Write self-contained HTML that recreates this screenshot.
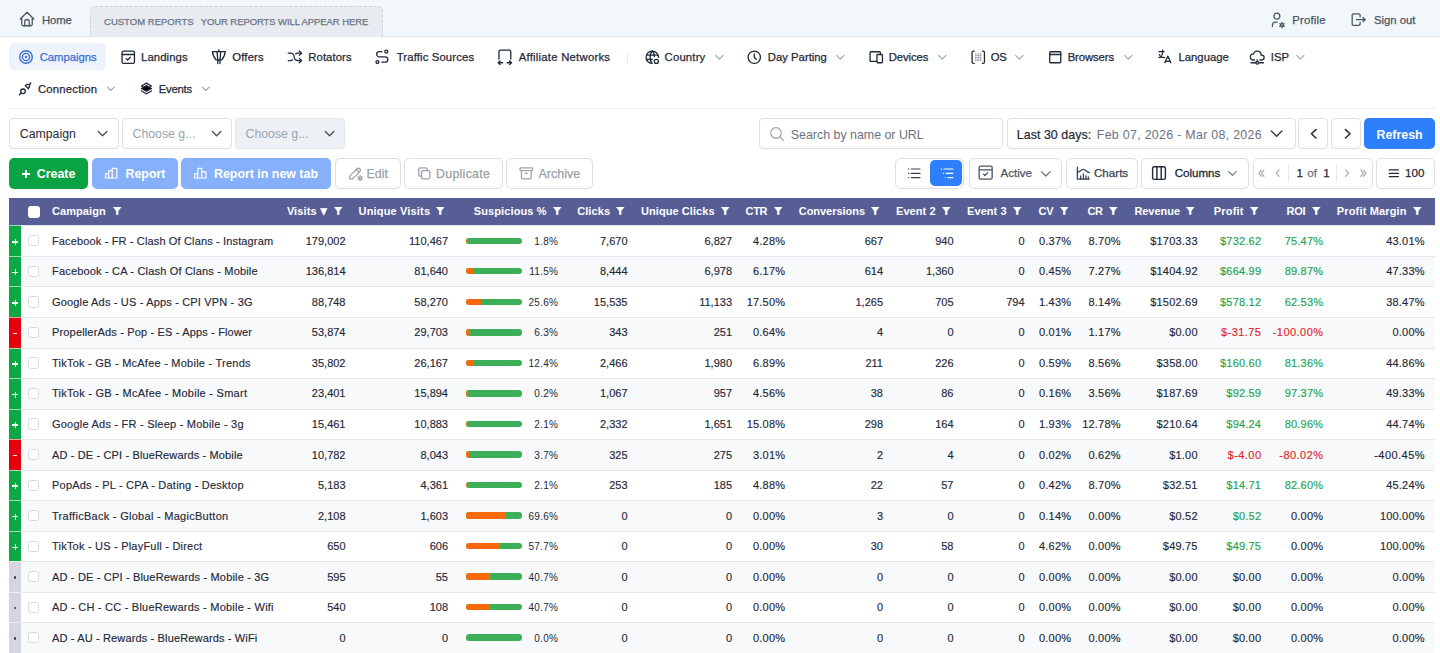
<!DOCTYPE html>
<html><head><meta charset="utf-8"><title>Campaigns</title>
<style>
html,body{margin:0;padding:0;width:1440px;height:653px;overflow:hidden;background:#fff;font-family:"Liberation Sans", sans-serif;}
#root{position:relative;width:1440px;height:653px;overflow:hidden;}
svg{display:block}
</style></head><body><div id="root">
<div style="position:absolute;left:0px;top:0px;width:1440px;height:37px;box-sizing:border-box;background:#f1f7fa;border-bottom:1px solid #dfe4e9"></div>
<svg style="position:absolute;left:17.75px;top:10.45px" width="18.0" height="18.0" viewBox="0 0 24 24" fill="none" stroke="#4b5563" stroke-width="1.73" stroke-linecap="round" stroke-linejoin="round" ><path d="M5 12H3l9-9 9 9h-2"/><path d="M5 12v7a2 2 0 0 0 2 2h10a2 2 0 0 0 2-2v-7"/><path d="M9 21v-6a2 2 0 0 1 2-2h2a2 2 0 0 1 2 2v6"/></svg>
<div style="position:absolute;left:42px;top:14.85px;font-size:11.3px;line-height:11.3px;color:#4b5563;font-weight:400;letter-spacing:-0.15px;white-space:nowrap;-webkit-text-stroke:0.25px currentColor;">Home</div>
<div style="position:absolute;left:90px;top:6px;width:293px;height:31px;box-sizing:border-box;background:#e8ecf1;border:1px dashed #cbd2da;border-bottom:none;border-radius:5px 5px 0 0"></div>
<div style="position:absolute;left:104px;top:16.75px;font-size:9.5px;line-height:9.5px;color:#6b7485;font-weight:400;letter-spacing:0.02px;white-space:nowrap;-webkit-text-stroke:0.25px currentColor;">CUSTOM REPORTS</div>
<div style="position:absolute;left:200.7px;top:16.75px;font-size:9.5px;line-height:9.5px;color:#6b7485;font-weight:400;letter-spacing:-0.083px;white-space:nowrap;-webkit-text-stroke:0.25px currentColor;">YOUR REPORTS WILL APPEAR HERE</div>
<svg style="position:absolute;left:1268.28px;top:11.08px" width="17.73" height="17.73" viewBox="0 0 24 24" fill="none" stroke="#4b5563" stroke-width="1.76" stroke-linecap="round" stroke-linejoin="round" ><circle cx="12" cy="7" r="4"/><path d="M6 21v-2a4 4 0 0 1 4-4h2.5"/><circle cx="19" cy="19" r="2"/><path d="M19 15.5V17M19 21v1.5M22.032 17.25l-1.299.75M17.27 20l-1.3.75M15.97 17.25l1.3.75M20.733 20l1.3.75"/></svg>
<div style="position:absolute;left:1292.3px;top:14.85px;font-size:11.3px;line-height:11.3px;color:#4b5563;font-weight:400;letter-spacing:0.21px;white-space:nowrap;-webkit-text-stroke:0.25px currentColor;">Profile</div>
<svg style="position:absolute;left:1349.83px;top:11.33px" width="17.33" height="17.33" viewBox="0 0 24 24" fill="none" stroke="#4b5563" stroke-width="1.8" stroke-linecap="round" stroke-linejoin="round" ><path d="M14 8V6a2 2 0 0 0-2-2H5a2 2 0 0 0-2 2v12a2 2 0 0 0 2 2h7a2 2 0 0 0 2-2v-2"/><path d="M9 12h12l-3-3"/><path d="M18 15l3-3"/></svg>
<div style="position:absolute;left:1374px;top:14.85px;font-size:11.3px;line-height:11.3px;color:#4b5563;font-weight:400;letter-spacing:0px;white-space:nowrap;-webkit-text-stroke:0.25px currentColor;">Sign out</div>
<div style="position:absolute;left:9px;top:43px;width:97px;height:27px;box-sizing:border-box;background:#eef3fb;border-radius:5px"></div>
<svg style="position:absolute;left:19px;top:49.8px" width="14" height="14" viewBox="0 0 14 14" fill="none" stroke="#3a6fd6" stroke-width="1.4" stroke-linecap="round" stroke-linejoin="round" ><circle cx="7" cy="7" r="6.3"/><circle cx="7" cy="7" r="3.6"/><circle cx="7" cy="7" r="1.2" fill="#3a6fd6" stroke="none"/></svg>
<div style="position:absolute;left:39.7px;top:51.85px;font-size:11.3px;line-height:11.3px;color:#3a6fd6;font-weight:400;letter-spacing:-0.024px;white-space:nowrap;-webkit-text-stroke:0.25px currentColor;">Campaigns</div>
<svg style="position:absolute;left:119.63px;top:48.53px" width="16.53" height="16.53" viewBox="0 0 24 24" fill="none" stroke="#1f2937" stroke-width="1.89" stroke-linecap="round" stroke-linejoin="round" ><rect x="3" y="3" width="18" height="18" rx="2"/><path d="M3 8h18"/><path d="M9 14l2 2 4-4"/></svg>
<div style="position:absolute;left:141px;top:51.85px;font-size:11.3px;line-height:11.3px;color:#1f2937;font-weight:400;letter-spacing:0.113px;white-space:nowrap;-webkit-text-stroke:0.25px currentColor;">Landings</div>
<svg style="position:absolute;left:209.58px;top:47.98px" width="17.73" height="17.73" viewBox="0 0 24 24" fill="none" stroke="#1f2937" stroke-width="1.76" stroke-linecap="round" stroke-linejoin="round" ><path d="M12 2.5v1.5"/><path d="M3.5 5h17"/><path d="M3.5 5c0 3 1.5 7 4.5 11h8c3-4 4.5-8 4.5-11"/><path d="M9.5 5l1 11M14.5 5l-1 11"/><path d="M10.5 16v5M13.5 16v5"/></svg>
<div style="position:absolute;left:232.3px;top:51.85px;font-size:11.3px;line-height:11.3px;color:#1f2937;font-weight:400;letter-spacing:0.159px;white-space:nowrap;-webkit-text-stroke:0.25px currentColor;">Offers</div>
<svg style="position:absolute;left:286.08px;top:47.98px" width="17.73" height="17.73" viewBox="0 0 24 24" fill="none" stroke="#1f2937" stroke-width="1.76" stroke-linecap="round" stroke-linejoin="round" ><path d="M18 4l3 3-3 3"/><path d="M18 20l3-3-3-3"/><path d="M3 7h3a5 5 0 0 1 5 5 5 5 0 0 0 5 5h5"/><path d="M21 7h-5a4.978 4.978 0 0 0-3 1m-4 8a4.984 4.984 0 0 1-3 1H3"/></svg>
<div style="position:absolute;left:308.3px;top:51.85px;font-size:11.3px;line-height:11.3px;color:#1f2937;font-weight:400;letter-spacing:0.079px;white-space:nowrap;-webkit-text-stroke:0.25px currentColor;">Rotators</div>
<svg style="position:absolute;left:373.48px;top:47.98px" width="17.73" height="17.73" viewBox="0 0 24 24" fill="none" stroke="#1f2937" stroke-width="1.76" stroke-linecap="round" stroke-linejoin="round" ><circle cx="6" cy="19" r="2"/><circle cx="18" cy="5" r="2"/><path d="M12 19h4.5a3.5 3.5 0 0 0 0-7h-8a3.5 3.5 0 0 1 0-7H12"/></svg>
<div style="position:absolute;left:396.7px;top:51.85px;font-size:11.3px;line-height:11.3px;color:#1f2937;font-weight:400;letter-spacing:0.144px;white-space:nowrap;-webkit-text-stroke:0.25px currentColor;">Traffic Sources</div>
<svg style="position:absolute;left:496.38px;top:47.98px" width="17.73" height="17.73" viewBox="0 0 24 24" fill="none" stroke="#1f2937" stroke-width="1.76" stroke-linecap="round" stroke-linejoin="round" ><path d="M4 15V5a2 2 0 0 1 2-2h12a2 2 0 0 1 2 2v10"/><path d="M3 20h6M5.5 17.5L3 20l2.5 2.5M15 20h6M18.5 17.5L21 20l-2.5 2.5"/></svg>
<div style="position:absolute;left:518.7px;top:51.85px;font-size:11.3px;line-height:11.3px;color:#1f2937;font-weight:400;letter-spacing:0.249px;white-space:nowrap;-webkit-text-stroke:0.25px currentColor;">Affiliate Networks</div>
<svg style="position:absolute;left:643.73px;top:48.53px" width="16.53" height="16.53" viewBox="0 0 24 24" fill="none" stroke="#1f2937" stroke-width="1.89" stroke-linecap="round" stroke-linejoin="round" ><path d="M21 12a9 9 0 1 0-9.5 9"/><path d="M3.6 9h16.8"/><path d="M3.6 15h8.4"/><path d="M11.5 3a17 17 0 0 0 0 18"/><path d="M12.5 3a17 17 0 0 1 2.5 8"/><circle cx="18" cy="18" r="3"/></svg>
<div style="position:absolute;left:664.6px;top:51.85px;font-size:11.3px;line-height:11.3px;color:#1f2937;font-weight:400;letter-spacing:0.182px;white-space:nowrap;-webkit-text-stroke:0.25px currentColor;">Country</div>
<svg style="position:absolute;left:712.35px;top:49.82px" width="14.6" height="14.6" viewBox="0 0 24 24" fill="none" stroke="#9ca3af" stroke-width="1.81" stroke-linecap="round" stroke-linejoin="round" ><path d="M6 9l6 6 6-6"/></svg>
<svg style="position:absolute;left:746.23px;top:48.53px" width="16.53" height="16.53" viewBox="0 0 24 24" fill="none" stroke="#1f2937" stroke-width="1.89" stroke-linecap="round" stroke-linejoin="round" ><circle cx="12" cy="12" r="9"/><path d="M12 7v5l3 3"/></svg>
<div style="position:absolute;left:767.8px;top:51.85px;font-size:11.3px;line-height:11.3px;color:#1f2937;font-weight:400;letter-spacing:0.006px;white-space:nowrap;-webkit-text-stroke:0.25px currentColor;">Day Parting</div>
<svg style="position:absolute;left:833.35px;top:49.82px" width="14.6" height="14.6" viewBox="0 0 24 24" fill="none" stroke="#9ca3af" stroke-width="1.81" stroke-linecap="round" stroke-linejoin="round" ><path d="M6 9l6 6 6-6"/></svg>
<svg style="position:absolute;left:867.73px;top:48.53px" width="16.53" height="16.53" viewBox="0 0 24 24" fill="none" stroke="#1f2937" stroke-width="1.89" stroke-linecap="round" stroke-linejoin="round" ><rect x="13" y="8" width="8" height="12" rx="1"/><path d="M18 8V5a1 1 0 0 0-1-1H4a1 1 0 0 0-1 1v12a1 1 0 0 0 1 1h9"/></svg>
<div style="position:absolute;left:888.7px;top:51.85px;font-size:11.3px;line-height:11.3px;color:#1f2937;font-weight:400;letter-spacing:-0.088px;white-space:nowrap;-webkit-text-stroke:0.25px currentColor;">Devices</div>
<svg style="position:absolute;left:935.35px;top:49.82px" width="14.6" height="14.6" viewBox="0 0 24 24" fill="none" stroke="#9ca3af" stroke-width="1.81" stroke-linecap="round" stroke-linejoin="round" ><path d="M6 9l6 6 6-6"/></svg>
<svg style="position:absolute;left:969.93px;top:48.53px" width="16.53" height="16.53" viewBox="0 0 24 24" fill="none" stroke="#1f2937" stroke-width="1.89" stroke-linecap="round" stroke-linejoin="round" ><path d="M6 3H5a2 2 0 0 0-2 2v14a2 2 0 0 0 2 2h1"/><path d="M18 3h1a2 2 0 0 1 2 2v14a2 2 0 0 1-2 2h-1"/><path stroke-width="1" stroke-opacity="0.55" stroke-dasharray="1 1.6" d="M8.5 6v12M12 6v12M15.5 6v12M8 9h8M8 12.5h8M8 16h8"/></svg>
<div style="position:absolute;left:990.8px;top:51.85px;font-size:11.3px;line-height:11.3px;color:#1f2937;font-weight:400;letter-spacing:-0.3px;white-space:nowrap;-webkit-text-stroke:0.25px currentColor;">OS</div>
<svg style="position:absolute;left:1011.55px;top:49.82px" width="14.6" height="14.6" viewBox="0 0 24 24" fill="none" stroke="#9ca3af" stroke-width="1.81" stroke-linecap="round" stroke-linejoin="round" ><path d="M6 9l6 6 6-6"/></svg>
<svg style="position:absolute;left:1046.93px;top:48.53px" width="16.53" height="16.53" viewBox="0 0 24 24" fill="none" stroke="#1f2937" stroke-width="1.89" stroke-linecap="round" stroke-linejoin="round" ><rect x="4" y="4" width="16" height="16" rx="1"/><path d="M4 8h16"/></svg>
<div style="position:absolute;left:1067.7px;top:51.85px;font-size:11.3px;line-height:11.3px;color:#1f2937;font-weight:400;letter-spacing:-0.104px;white-space:nowrap;-webkit-text-stroke:0.25px currentColor;">Browsers</div>
<svg style="position:absolute;left:1120.75px;top:49.82px" width="14.6" height="14.6" viewBox="0 0 24 24" fill="none" stroke="#9ca3af" stroke-width="1.81" stroke-linecap="round" stroke-linejoin="round" ><path d="M6 9l6 6 6-6"/></svg>
<svg style="position:absolute;left:1156.38px;top:47.98px" width="17.73" height="17.73" viewBox="0 0 24 24" fill="none" stroke="#1f2937" stroke-width="1.76" stroke-linecap="round" stroke-linejoin="round" ><path d="M4 5h7"/><path d="M9 3v2c0 4.418-2.239 8-5 8"/><path d="M5 9c0 2.144 2.952 3.908 6.7 4"/><path d="M12 20l4-9 4 9"/><path d="M19.1 18h-6.2"/></svg>
<div style="position:absolute;left:1178.5px;top:51.85px;font-size:11.3px;line-height:11.3px;color:#1f2937;font-weight:400;letter-spacing:0.003px;white-space:nowrap;-webkit-text-stroke:0.25px currentColor;">Language</div>
<svg style="position:absolute;left:1249.43px;top:48.53px" width="16.53" height="16.53" viewBox="0 0 24 24" fill="none" stroke="#1f2937" stroke-width="1.89" stroke-linecap="round" stroke-linejoin="round" ><path d="M3 20h7"/><path d="M14 20h7"/><path d="M10 20a2 2 0 1 0 4 0 2 2 0 0 0-4 0"/><path d="M12 16v2"/><path d="M8 16.004H6.657C4.085 16 2 13.993 2 11.517c0-2.475 2.085-4.482 4.657-4.482.393-1.762 1.794-3.2 3.675-3.773 1.88-.572 3.956-.193 5.444 1 1.488 1.19 2.162 3.007 1.77 4.769h.99c1.913 0 3.464 1.56 3.464 3.486 0 1.927-1.551 3.487-3.465 3.487H16"/></svg>
<div style="position:absolute;left:1270.8px;top:51.85px;font-size:11.3px;line-height:11.3px;color:#1f2937;font-weight:400;letter-spacing:0.013px;white-space:nowrap;-webkit-text-stroke:0.25px currentColor;">ISP</div>
<svg style="position:absolute;left:1293.05px;top:49.82px" width="14.6" height="14.6" viewBox="0 0 24 24" fill="none" stroke="#9ca3af" stroke-width="1.81" stroke-linecap="round" stroke-linejoin="round" ><path d="M6 9l6 6 6-6"/></svg>
<div style="position:absolute;left:627px;top:52px;width:1px;height:11px;box-sizing:border-box;background:#e5e7eb"></div>
<svg style="position:absolute;left:15px;top:78px" width="22" height="20" viewBox="15 78 22 20" fill="none" stroke="#1f2937" stroke-width="1.3" stroke-linecap="round" stroke-linejoin="round"><circle cx="23" cy="91.3" r="2.3"/><path d="M21.2 93L19.4 94.8"/><path d="M25.3 85.6L28.4 88.7Q29.9 86.6 29.6 84.5Q27.6 84.1 25.3 85.6Z"/><path d="M29.5 84.4L30.9 83"/></svg>
<div style="position:absolute;left:38px;top:83.85px;font-size:11.3px;line-height:11.3px;color:#1f2937;font-weight:400;letter-spacing:0.203px;white-space:nowrap;-webkit-text-stroke:0.25px currentColor;">Connection</div>
<svg style="position:absolute;left:103.6px;top:82.2px" width="13.6" height="13.6" viewBox="0 0 24 24" fill="none" stroke="#9ca3af" stroke-width="1.94" stroke-linecap="round" stroke-linejoin="round" ><path d="M6 9l6 6 6-6"/></svg>
<svg style="position:absolute;left:138.63px;top:80.93px" width="14.93" height="14.93" viewBox="0 0 24 24" fill="none" stroke="#1f2937" stroke-width="2.09" stroke-linecap="round" stroke-linejoin="round" ><path d="M12 3.5L4 8l8 4.5 8-4.5z"/><path d="M4 12l8 4.5 8-4.5-8-4.5z" fill="currentColor"/><path d="M4 16l8 4.5 8-4.5"/></svg>
<div style="position:absolute;left:158.7px;top:83.85px;font-size:11.3px;line-height:11.3px;color:#1f2937;font-weight:400;letter-spacing:-0.218px;white-space:nowrap;-webkit-text-stroke:0.25px currentColor;">Events</div>
<svg style="position:absolute;left:198.9px;top:82.2px" width="13.6" height="13.6" viewBox="0 0 24 24" fill="none" stroke="#9ca3af" stroke-width="1.94" stroke-linecap="round" stroke-linejoin="round" ><path d="M6 9l6 6 6-6"/></svg>
<div style="position:absolute;left:9px;top:108px;width:1426px;height:1px;box-sizing:border-box;background:#eceef1"></div>
<div style="position:absolute;left:9px;top:118px;width:110px;height:31px;box-sizing:border-box;background:#fff;border:1px solid #dcdfe4;border-radius:4px"></div>
<div style="position:absolute;left:19.8px;top:128.35px;font-size:12.3px;line-height:12.3px;color:#1f2937;font-weight:400;letter-spacing:0px;white-space:nowrap;">Campaign</div>
<svg style="position:absolute;left:94.0px;top:124.75px" width="17.2" height="17.2" viewBox="0 0 24 24" fill="none" stroke="#4b5563" stroke-width="1.95" stroke-linecap="round" stroke-linejoin="round" ><path d="M6 9l6 6 6-6"/></svg>
<div style="position:absolute;left:122px;top:118px;width:110px;height:31px;box-sizing:border-box;background:#fff;border:1px solid #dcdfe4;border-radius:4px"></div>
<div style="position:absolute;left:132.5px;top:128.35px;font-size:12.3px;line-height:12.3px;color:#9ca3af;font-weight:400;letter-spacing:0px;white-space:nowrap;">Choose g...</div>
<svg style="position:absolute;left:207.5px;top:124.75px" width="17.2" height="17.2" viewBox="0 0 24 24" fill="none" stroke="#4b5563" stroke-width="1.95" stroke-linecap="round" stroke-linejoin="round" ><path d="M6 9l6 6 6-6"/></svg>
<div style="position:absolute;left:235px;top:118px;width:110px;height:31px;box-sizing:border-box;background:#edf1f6;border:1px solid #e3e7ec;border-radius:4px"></div>
<div style="position:absolute;left:245.5px;top:128.35px;font-size:12.3px;line-height:12.3px;color:#9ca3af;font-weight:400;letter-spacing:0px;white-space:nowrap;">Choose g...</div>
<svg style="position:absolute;left:320.5px;top:124.75px" width="17.2" height="17.2" viewBox="0 0 24 24" fill="none" stroke="#4b5563" stroke-width="1.95" stroke-linecap="round" stroke-linejoin="round" ><path d="M6 9l6 6 6-6"/></svg>
<div style="position:absolute;left:759px;top:118px;width:244px;height:31px;box-sizing:border-box;background:#fff;border:1px solid #dcdfe4;border-radius:4px"></div>
<svg style="position:absolute;left:770px;top:126.7px" width="14" height="14" viewBox="0 0 14 14" fill="none" stroke="#9ca3af" stroke-width="1.2" stroke-linecap="round" stroke-linejoin="round" ><circle cx="6" cy="6" r="5.3"/><path d="M10 10l3.6 3.6"/></svg>
<div style="position:absolute;left:790.8px;top:129.30px;font-size:12.4px;line-height:12.4px;color:#6b7280;font-weight:400;letter-spacing:0px;white-space:nowrap;">Search by name or URL</div>
<div style="position:absolute;left:1006.5px;top:118px;width:289.5px;height:31px;box-sizing:border-box;background:#fff;border:1px solid #dcdfe4;border-radius:4px"></div>
<div style="position:absolute;left:1016.8px;top:129.30px;font-size:12.4px;line-height:12.4px;color:#1f2937;font-weight:400;letter-spacing:0.05px;white-space:nowrap;-webkit-text-stroke:0.2px currentColor;">Last 30 days:</div>
<div style="position:absolute;left:1096.8px;top:129.30px;font-size:12.4px;line-height:12.4px;color:#6b7280;font-weight:400;letter-spacing:0.3px;white-space:nowrap;">Feb 07, 2026 - Mar 08, 2026</div>
<svg style="position:absolute;left:1265.7px;top:123.05px" width="21.2" height="21.2" viewBox="0 0 24 24" fill="none" stroke="#374151" stroke-width="1.7" stroke-linecap="round" stroke-linejoin="round" ><path d="M6 9l6 6 6-6"/></svg>
<div style="position:absolute;left:1298px;top:118px;width:30px;height:31px;box-sizing:border-box;background:#fff;border:1px solid #dcdfe4;border-radius:4px"></div>
<svg style="position:absolute;left:1300px;top:120px" width="28" height="28" viewBox="1300 120 28 28" fill="none" stroke="#1f2937" stroke-width="1.5" stroke-linecap="round" stroke-linejoin="round"><path d="M1316 129.6L1311.4 133.8L1316 138"/></svg>
<div style="position:absolute;left:1330.5px;top:118px;width:30.5px;height:31px;box-sizing:border-box;background:#fff;border:1px solid #dcdfe4;border-radius:4px"></div>
<svg style="position:absolute;left:1332px;top:120px" width="28" height="28" viewBox="1332 120 28 28" fill="none" stroke="#1f2937" stroke-width="1.5" stroke-linecap="round" stroke-linejoin="round"><path d="M1345.4 129.6L1350 133.8L1345.4 138"/></svg>
<div style="position:absolute;left:1364px;top:118px;width:71px;height:31px;box-sizing:border-box;background:#2d7ffb;border-radius:5px"></div>
<div style="position:absolute;left:1376.5px;top:129.30px;font-size:12.4px;line-height:12.4px;color:#fff;font-weight:700;letter-spacing:0px;white-space:nowrap;">Refresh</div>
<div style="position:absolute;left:9px;top:158px;width:79px;height:30.5px;box-sizing:border-box;background:#0aa344;border-radius:5px"></div>
<svg style="position:absolute;left:22px;top:170.4px" width="8" height="8" viewBox="0 0 8 8" fill="none" stroke="#fff" stroke-width="2" stroke-linecap="round" stroke-linejoin="round" ><path d="M4 0.5v7M0.5 4h7"/></svg>
<div style="position:absolute;left:36.8px;top:168.30px;font-size:12.4px;line-height:12.4px;color:#fff;font-weight:700;letter-spacing:0px;white-space:nowrap;">Create</div>
<div style="position:absolute;left:92px;top:158px;width:85.5px;height:30.5px;box-sizing:border-box;background:#86b1fa;border-radius:5px"></div>
<svg style="position:absolute;left:100px;top:162px" width="22" height="22" viewBox="100 162 22 22" fill="none" stroke="#fff" stroke-width="1.2" stroke-linecap="round" stroke-linejoin="round"><path d="M105.5 178V174.3a.6 .6 0 0 1 .6-.6H108.6V178ZM108.6 178V171.2a.6 .6 0 0 1 .6-.6H112.2V178ZM112.2 178V168.9a.6 .6 0 0 1 .6-.6H116.2a.6 .6 0 0 1 .6.6V178Z"/></svg>
<div style="position:absolute;left:125.5px;top:168.30px;font-size:12.4px;line-height:12.4px;color:#fff;font-weight:700;letter-spacing:0px;white-space:nowrap;">Report</div>
<div style="position:absolute;left:181px;top:158px;width:150px;height:30.5px;box-sizing:border-box;background:#86b1fa;border-radius:5px"></div>
<svg style="position:absolute;left:190px;top:162px" width="22" height="22" viewBox="190 162 22 22" fill="none" stroke="#fff" stroke-width="1.2" stroke-linecap="round" stroke-linejoin="round"><path d="M194.7 178V174.3a.6 .6 0 0 1 .6-.6H197.8V178ZM197.8 178V168.9a.6 .6 0 0 1 .6-.6H201.2a.6 .6 0 0 1 .6.6V178ZM201.8 178V171.8H205.4a.6 .6 0 0 1 .6.6V178Z"/></svg>
<div style="position:absolute;left:214px;top:168.30px;font-size:12.4px;line-height:12.4px;color:#fff;font-weight:700;letter-spacing:0px;white-space:nowrap;">Report in new tab</div>
<div style="position:absolute;left:334.5px;top:158px;width:66.5px;height:30.5px;box-sizing:border-box;background:#fff;border:1px solid #dcdfe4;border-radius:5px"></div>
<svg style="position:absolute;left:346.92px;top:164.92px" width="16.67" height="16.67" viewBox="0 0 24 24" fill="none" stroke="#9ea2a9" stroke-width="1.87" stroke-linecap="round" stroke-linejoin="round" ><path d="M4 20h4l10.5-10.5a2.828 2.828 0 1 0-4-4L4 16v4"/><path d="M13.5 6.5l4 4"/><circle cx="19" cy="19" r="2"/><path d="M19 15.5V17M19 21v1.5M22 17.2l-1.3.8M17.3 20l-1.3.8M16 17.2l1.3.8M20.7 20l1.3.8"/></svg>
<div style="position:absolute;left:366.5px;top:168.30px;font-size:12.4px;line-height:12.4px;color:#9b9fa6;font-weight:400;letter-spacing:0.031px;white-space:nowrap;-webkit-text-stroke:0.25px currentColor;">Edit</div>
<div style="position:absolute;left:404px;top:158px;width:99px;height:30.5px;box-sizing:border-box;background:#fff;border:1px solid #dcdfe4;border-radius:5px"></div>
<svg style="position:absolute;left:416.42px;top:164.92px" width="16.67" height="16.67" viewBox="0 0 24 24" fill="none" stroke="#9ea2a9" stroke-width="1.87" stroke-linecap="round" stroke-linejoin="round" ><rect x="8" y="8" width="12" height="12" rx="2"/><path d="M16 8V6a2 2 0 0 0-2-2H6a2 2 0 0 0-2 2v8a2 2 0 0 0 2 2h2"/></svg>
<div style="position:absolute;left:436px;top:168.30px;font-size:12.4px;line-height:12.4px;color:#9b9fa6;font-weight:400;letter-spacing:0.279px;white-space:nowrap;-webkit-text-stroke:0.25px currentColor;">Duplicate</div>
<div style="position:absolute;left:506px;top:158px;width:87px;height:30.5px;box-sizing:border-box;background:#fff;border:1px solid #dcdfe4;border-radius:5px"></div>
<svg style="position:absolute;left:518.42px;top:164.92px" width="16.67" height="16.67" viewBox="0 0 24 24" fill="none" stroke="#9ea2a9" stroke-width="1.87" stroke-linecap="round" stroke-linejoin="round" ><rect x="3" y="4" width="18" height="4" rx="1"/><path d="M5 8v10a2 2 0 0 0 2 2h10a2 2 0 0 0 2-2V8"/><path d="M10 12h4"/></svg>
<div style="position:absolute;left:538.5px;top:168.30px;font-size:12.4px;line-height:12.4px;color:#9b9fa6;font-weight:400;letter-spacing:0.062px;white-space:nowrap;-webkit-text-stroke:0.25px currentColor;">Archive</div>
<div style="position:absolute;left:895.2px;top:158px;width:69.29999999999995px;height:30.5px;box-sizing:border-box;background:#fff;border:1px solid #dcdfe4;border-radius:6px"></div>
<svg style="position:absolute;left:904px;top:164px" width="20" height="18" viewBox="904 164 20 18" fill="none" stroke="#374151" stroke-width="1.2" stroke-linecap="round" stroke-linejoin="round"><path d="M911.3 169H920M911.3 173.4H920M911.3 177.6H920"/><path stroke-width="1.3" d="M908.7 169h.01M908.7 173.4h.01M908.7 177.6h.01"/></svg>
<div style="position:absolute;left:930px;top:160px;width:32.39999999999998px;height:26.400000000000006px;box-sizing:border-box;background:#2d7ffb;border-radius:5px"></div>
<svg style="position:absolute;left:936px;top:164px" width="20" height="18" viewBox="936 164 20 18" fill="none" stroke="#fff" stroke-width="1.2" stroke-linecap="round" stroke-linejoin="round"><path d="M944 169H952.8M946 173.4H952.8M948 177.6H952.8"/><path stroke-width="1.3" d="M941.4 169h.01M943.4 173.4h.01M945.5 177.6h.01"/></svg>
<div style="position:absolute;left:968.5px;top:158px;width:93.5px;height:30.5px;box-sizing:border-box;background:#fff;border:1px solid #dcdfe4;border-radius:5px"></div>
<svg style="position:absolute;left:976.83px;top:164.33px" width="17.33" height="17.33" viewBox="0 0 24 24" fill="none" stroke="#4b5563" stroke-width="1.8" stroke-linecap="round" stroke-linejoin="round" ><rect x="3" y="3" width="18" height="18" rx="2"/><path d="M3 8h18"/><path d="M9 14l2 2 4-4"/></svg>
<div style="position:absolute;left:1000.5px;top:166.70px;font-size:11.6px;line-height:11.6px;color:#4b5563;font-weight:400;letter-spacing:0px;white-space:nowrap;-webkit-text-stroke:0.25px currentColor;">Active</div>
<svg style="position:absolute;left:1037.3px;top:164.9px" width="17.6" height="17.6" viewBox="0 0 24 24" fill="none" stroke="#6b7280" stroke-width="1.64" stroke-linecap="round" stroke-linejoin="round" ><path d="M6 9l6 6 6-6"/></svg>
<div style="position:absolute;left:1065.5px;top:158px;width:72.5px;height:30.5px;box-sizing:border-box;background:#fff;border:1px solid #dcdfe4;border-radius:5px"></div>
<svg style="position:absolute;left:1072px;top:162px" width="22" height="22" viewBox="1072 162 22 22" fill="none" stroke="#374151" stroke-width="1.3" stroke-linecap="round" stroke-linejoin="round"><path d="M1077.4 167.2V179.1H1089.2"/><path d="M1077.4 172.3C1080 172.3 1081 169.3 1083.3 169.3C1085.6 169.3 1086.6 172.5 1089.3 172.5"/><path d="M1080.6 176V179M1083.4 174V179M1085.9 176V179M1088.3 177V179"/></svg>
<div style="position:absolute;left:1094px;top:166.70px;font-size:11.6px;line-height:11.6px;color:#374151;font-weight:400;letter-spacing:0px;white-space:nowrap;-webkit-text-stroke:0.25px currentColor;">Charts</div>
<div style="position:absolute;left:1141px;top:158px;width:108px;height:30.5px;box-sizing:border-box;background:#fff;border:1px solid #dcdfe4;border-radius:5px"></div>
<svg style="position:absolute;left:1148px;top:162px" width="22" height="22" viewBox="1148 162 22 22" fill="none" stroke="#1f2937" stroke-width="1.4" stroke-linecap="round" stroke-linejoin="round"><rect x="1152.6" y="166.8" width="12.8" height="12.6" rx="1.6"/><path d="M1156.9 166.8V179.4M1161.2 166.8V179.4"/></svg>
<div style="position:absolute;left:1174.8px;top:166.70px;font-size:11.6px;line-height:11.6px;color:#1f2937;font-weight:400;letter-spacing:-0.05px;white-space:nowrap;-webkit-text-stroke:0.3px currentColor;">Columns</div>
<svg style="position:absolute;left:1224.75px;top:165.57px" width="15.0" height="15.0" viewBox="0 0 24 24" fill="none" stroke="#6b7280" stroke-width="1.76" stroke-linecap="round" stroke-linejoin="round" ><path d="M6 9l6 6 6-6"/></svg>
<div style="position:absolute;left:1252.5px;top:158px;width:120.5px;height:30.5px;box-sizing:border-box;background:#fff;border:1px solid #dcdfe4;border-radius:5px"></div>
<svg style="position:absolute;left:1254px;top:164px" width="16" height="16" viewBox="1254 164 16 16" fill="none" stroke="#9ca3af" stroke-width="1.1" stroke-linecap="round" stroke-linejoin="round"><path d="M1261.4 170.2L1258.8 173.3L1261.4 176.4M1264 170.2L1261.4 173.3L1264 176.4"/></svg>
<svg style="position:absolute;left:1270px;top:164px" width="16" height="16" viewBox="1270 164 16 16" fill="none" stroke="#9ca3af" stroke-width="1.1" stroke-linecap="round" stroke-linejoin="round"><path d="M1279.2 169.8L1276.1 173.2L1279.2 176.4"/></svg>
<div style="position:absolute;left:1288.2px;top:164.4px;width:1.0px;height:17.299999999999983px;box-sizing:border-box;background:#e8eaed"></div>
<div style="position:absolute;left:1296.6px;top:166.70px;font-size:11.6px;line-height:11.6px;color:#1f2937;font-weight:400;letter-spacing:0px;white-space:nowrap;-webkit-text-stroke:0.25px currentColor;">1</div>
<div style="position:absolute;left:1307.3px;top:166.70px;font-size:11.6px;line-height:11.6px;color:#6b7280;font-weight:400;letter-spacing:0px;white-space:nowrap;-webkit-text-stroke:0.25px currentColor;">of</div>
<div style="position:absolute;left:1323.3px;top:166.70px;font-size:11.6px;line-height:11.6px;color:#1f2937;font-weight:400;letter-spacing:0px;white-space:nowrap;-webkit-text-stroke:0.25px currentColor;">1</div>
<div style="position:absolute;left:1335.5px;top:164.4px;width:1.0px;height:17.299999999999983px;box-sizing:border-box;background:#e8eaed"></div>
<svg style="position:absolute;left:1340px;top:164px" width="16" height="16" viewBox="1340 164 16 16" fill="none" stroke="#9ca3af" stroke-width="1.1" stroke-linecap="round" stroke-linejoin="round"><path d="M1345.5 169.8L1348.6 173.2L1345.5 176.4"/></svg>
<svg style="position:absolute;left:1354px;top:164px" width="16" height="16" viewBox="1354 164 16 16" fill="none" stroke="#9ca3af" stroke-width="1.1" stroke-linecap="round" stroke-linejoin="round"><path d="M1360.8 170.2L1363.4 173.3L1360.8 176.4M1363.4 170.2L1366 173.3L1363.4 176.4"/></svg>
<div style="position:absolute;left:1376px;top:158px;width:59px;height:30.5px;box-sizing:border-box;background:#fff;border:1px solid #dcdfe4;border-radius:5px"></div>
<svg style="position:absolute;left:1384px;top:164px" width="18" height="18" viewBox="1384 164 18 18" fill="none" stroke="#1f2937" stroke-width="1.3" stroke-linecap="round" stroke-linejoin="round"><path d="M1389.2 169.9H1398.4M1389.2 173.3H1398.4M1389.2 176.6H1398.4"/></svg>
<div style="position:absolute;left:1405px;top:166.70px;font-size:11.6px;line-height:11.6px;color:#1f2937;font-weight:400;letter-spacing:0px;white-space:nowrap;-webkit-text-stroke:0.25px currentColor;">100</div>
<div style="position:absolute;left:9px;top:198px;width:1426px;height:27px;box-sizing:border-box;background:#575e95"></div>
<div style="position:absolute;left:28px;top:205.5px;width:12px;height:12.0px;box-sizing:border-box;background:#fff;border-radius:3px"></div>
<div style="position:absolute;left:52px;top:206.00px;font-size:11px;line-height:11px;color:#fff;font-weight:700;letter-spacing:0.078px;white-space:nowrap;">Campaign</div>
<svg style="position:absolute;left:113.3px;top:207.3px" width="9" height="8" viewBox="0 0 9 8"><path d="M0.1 0.1H8.4L5.3 4V7.7H3.2V4Z" fill="#fff" stroke="#fff" stroke-width="0.2" stroke-linejoin="round"/></svg>
<svg style="position:absolute;left:333.6px;top:207.3px" width="9" height="8" viewBox="0 0 9 8"><path d="M0.1 0.1H8.4L5.3 4V7.7H3.2V4Z" fill="#fff" stroke="#fff" stroke-width="0.2" stroke-linejoin="round"/></svg>
<svg style="position:absolute;left:319.8px;top:207.6px" width="8" height="8" viewBox="0 0 8 8"><path d="M0.3 0.3H7.2L3.75 7.4Z" fill="#fff" stroke="#fff" stroke-width="0.5" stroke-linejoin="round"/></svg>
<div style="position:absolute;right:1123.406px;top:206.00px;font-size:11px;line-height:11px;color:#fff;font-weight:700;letter-spacing:0.094px;white-space:nowrap;text-align:right;">Visits</div>
<svg style="position:absolute;left:436.1px;top:207.3px" width="9" height="8" viewBox="0 0 9 8"><path d="M0.1 0.1H8.4L5.3 4V7.7H3.2V4Z" fill="#fff" stroke="#fff" stroke-width="0.2" stroke-linejoin="round"/></svg>
<div style="position:absolute;right:1009.8389999999999px;top:206.00px;font-size:11px;line-height:11px;color:#fff;font-weight:700;letter-spacing:0.161px;white-space:nowrap;text-align:right;">Unique Visits</div>
<svg style="position:absolute;left:552.6px;top:207.3px" width="9" height="8" viewBox="0 0 9 8"><path d="M0.1 0.1H8.4L5.3 4V7.7H3.2V4Z" fill="#fff" stroke="#fff" stroke-width="0.2" stroke-linejoin="round"/></svg>
<div style="position:absolute;right:893.385px;top:206.00px;font-size:11px;line-height:11px;color:#fff;font-weight:700;letter-spacing:0.115px;white-space:nowrap;text-align:right;">Suspicious %</div>
<svg style="position:absolute;left:616.1px;top:207.3px" width="9" height="8" viewBox="0 0 9 8"><path d="M0.1 0.1H8.4L5.3 4V7.7H3.2V4Z" fill="#fff" stroke="#fff" stroke-width="0.2" stroke-linejoin="round"/></svg>
<div style="position:absolute;right:829.918px;top:206.00px;font-size:11px;line-height:11px;color:#fff;font-weight:700;letter-spacing:0.082px;white-space:nowrap;text-align:right;">Clicks</div>
<svg style="position:absolute;left:720.6px;top:207.3px" width="9" height="8" viewBox="0 0 9 8"><path d="M0.1 0.1H8.4L5.3 4V7.7H3.2V4Z" fill="#fff" stroke="#fff" stroke-width="0.2" stroke-linejoin="round"/></svg>
<div style="position:absolute;right:725.435px;top:206.00px;font-size:11px;line-height:11px;color:#fff;font-weight:700;letter-spacing:0.065px;white-space:nowrap;text-align:right;">Unique Clicks</div>
<svg style="position:absolute;left:773.6px;top:207.3px" width="9" height="8" viewBox="0 0 9 8"><path d="M0.1 0.1H8.4L5.3 4V7.7H3.2V4Z" fill="#fff" stroke="#fff" stroke-width="0.2" stroke-linejoin="round"/></svg>
<div style="position:absolute;right:672.8px;top:206.00px;font-size:11px;line-height:11px;color:#fff;font-weight:700;letter-spacing:-0.3px;white-space:nowrap;text-align:right;">CTR</div>
<svg style="position:absolute;left:871.1px;top:207.3px" width="9" height="8" viewBox="0 0 9 8"><path d="M0.1 0.1H8.4L5.3 4V7.7H3.2V4Z" fill="#fff" stroke="#fff" stroke-width="0.2" stroke-linejoin="round"/></svg>
<div style="position:absolute;right:575.041px;top:206.00px;font-size:11px;line-height:11px;color:#fff;font-weight:700;letter-spacing:-0.041px;white-space:nowrap;text-align:right;">Conversions</div>
<svg style="position:absolute;left:941.6px;top:207.3px" width="9" height="8" viewBox="0 0 9 8"><path d="M0.1 0.1H8.4L5.3 4V7.7H3.2V4Z" fill="#fff" stroke="#fff" stroke-width="0.2" stroke-linejoin="round"/></svg>
<div style="position:absolute;right:504.43499999999995px;top:206.00px;font-size:11px;line-height:11px;color:#fff;font-weight:700;letter-spacing:0.065px;white-space:nowrap;text-align:right;">Event 2</div>
<svg style="position:absolute;left:1012.6px;top:207.3px" width="9" height="8" viewBox="0 0 9 8"><path d="M0.1 0.1H8.4L5.3 4V7.7H3.2V4Z" fill="#fff" stroke="#fff" stroke-width="0.2" stroke-linejoin="round"/></svg>
<div style="position:absolute;right:433.452px;top:206.00px;font-size:11px;line-height:11px;color:#fff;font-weight:700;letter-spacing:0.048px;white-space:nowrap;text-align:right;">Event 3</div>
<svg style="position:absolute;left:1059.6px;top:207.3px" width="9" height="8" viewBox="0 0 9 8"><path d="M0.1 0.1H8.4L5.3 4V7.7H3.2V4Z" fill="#fff" stroke="#fff" stroke-width="0.2" stroke-linejoin="round"/></svg>
<div style="position:absolute;right:386.79999999999995px;top:206.00px;font-size:11px;line-height:11px;color:#fff;font-weight:700;letter-spacing:-0.3px;white-space:nowrap;text-align:right;">CV</div>
<svg style="position:absolute;left:1109.1px;top:207.3px" width="9" height="8" viewBox="0 0 9 8"><path d="M0.1 0.1H8.4L5.3 4V7.7H3.2V4Z" fill="#fff" stroke="#fff" stroke-width="0.2" stroke-linejoin="round"/></svg>
<div style="position:absolute;right:337.29999999999995px;top:206.00px;font-size:11px;line-height:11px;color:#fff;font-weight:700;letter-spacing:-0.3px;white-space:nowrap;text-align:right;">CR</div>
<svg style="position:absolute;left:1186.1px;top:207.3px" width="9" height="8" viewBox="0 0 9 8"><path d="M0.1 0.1H8.4L5.3 4V7.7H3.2V4Z" fill="#fff" stroke="#fff" stroke-width="0.2" stroke-linejoin="round"/></svg>
<div style="position:absolute;right:260.039px;top:206.00px;font-size:11px;line-height:11px;color:#fff;font-weight:700;letter-spacing:-0.039px;white-space:nowrap;text-align:right;">Revenue</div>
<svg style="position:absolute;left:1249.6px;top:207.3px" width="9" height="8" viewBox="0 0 9 8"><path d="M0.1 0.1H8.4L5.3 4V7.7H3.2V4Z" fill="#fff" stroke="#fff" stroke-width="0.2" stroke-linejoin="round"/></svg>
<div style="position:absolute;right:196.31099999999992px;top:206.00px;font-size:11px;line-height:11px;color:#fff;font-weight:700;letter-spacing:0.189px;white-space:nowrap;text-align:right;">Profit</div>
<svg style="position:absolute;left:1311.6px;top:207.3px" width="9" height="8" viewBox="0 0 9 8"><path d="M0.1 0.1H8.4L5.3 4V7.7H3.2V4Z" fill="#fff" stroke="#fff" stroke-width="0.2" stroke-linejoin="round"/></svg>
<div style="position:absolute;right:134.79999999999995px;top:206.00px;font-size:11px;line-height:11px;color:#fff;font-weight:700;letter-spacing:-0.3px;white-space:nowrap;text-align:right;">ROI</div>
<svg style="position:absolute;left:1412.6px;top:207.3px" width="9" height="8" viewBox="0 0 9 8"><path d="M0.1 0.1H8.4L5.3 4V7.7H3.2V4Z" fill="#fff" stroke="#fff" stroke-width="0.2" stroke-linejoin="round"/></svg>
<div style="position:absolute;right:33.343000000000075px;top:206.00px;font-size:11px;line-height:11px;color:#fff;font-weight:700;letter-spacing:0.157px;white-space:nowrap;text-align:right;">Profit Margin</div>
<div style="position:absolute;left:21px;top:225.40px;width:1414px;height:30.53px;background:#ffffff;border-top:1px solid #e6e8ec;box-sizing:border-box"></div>
<div style="position:absolute;left:9px;top:225.40px;width:12.4px;height:30.53px;background:#0ca846;border-top:1px solid rgba(255,255,255,0.6);box-sizing:border-box"></div>
<div style="position:absolute;left:12.2px;top:241.22px;width:6px;height:1.3px;background:#fff"></div>
<div style="position:absolute;left:14.55px;top:238.87px;width:1.3px;height:6px;background:#fff"></div>
<div style="position:absolute;left:28.2px;top:235.27px;width:11.2px;height:11.2px;box-sizing:border-box;border:1px solid #d8dbe0;border-radius:2.8px;background:#fff"></div>
<div style="position:absolute;left:52px;top:236.00px;font-size:11px;line-height:11px;color:#1f2937;font-weight:400;letter-spacing:0.144px;white-space:nowrap;-webkit-text-stroke:0.15px currentColor;">Facebook - FR - Clash Of Clans - Instagram</div>
<div style="position:absolute;right:1094.5px;top:236.00px;font-size:11px;line-height:11px;color:#1f2937;font-weight:400;letter-spacing:0.0px;white-space:nowrap;text-align:right;-webkit-text-stroke:0.15px currentColor;">179,002</div>
<div style="position:absolute;right:992.0px;top:236.00px;font-size:11px;line-height:11px;color:#1f2937;font-weight:400;letter-spacing:0.0px;white-space:nowrap;text-align:right;-webkit-text-stroke:0.15px currentColor;">110,467</div>
<div style="position:absolute;left:466.1px;top:237.57px;width:55.9px;height:6.4px;border-radius:3.2px;background:#3daf58;overflow:hidden"><div style="position:absolute;left:0;top:0;height:6.4px;width:2.2px;background:#fa6a0a"></div></div>
<div style="position:absolute;right:881.7px;top:236.50px;font-size:10px;line-height:10px;color:#1f2937;font-weight:400;letter-spacing:0.3px;white-space:nowrap;text-align:right;">1.8%</div>
<div style="position:absolute;right:812.5px;top:236.00px;font-size:11px;line-height:11px;color:#1f2937;font-weight:400;letter-spacing:0.0px;white-space:nowrap;text-align:right;-webkit-text-stroke:0.15px currentColor;">7,670</div>
<div style="position:absolute;right:708.0px;top:236.00px;font-size:11px;line-height:11px;color:#1f2937;font-weight:400;letter-spacing:0.0px;white-space:nowrap;text-align:right;-webkit-text-stroke:0.15px currentColor;">6,827</div>
<div style="position:absolute;right:654.8px;top:236.00px;font-size:11px;line-height:11px;color:#1f2937;font-weight:400;letter-spacing:0.2px;white-space:nowrap;text-align:right;-webkit-text-stroke:0.15px currentColor;">4.28%</div>
<div style="position:absolute;right:557.0px;top:236.00px;font-size:11px;line-height:11px;color:#1f2937;font-weight:400;letter-spacing:0.0px;white-space:nowrap;text-align:right;-webkit-text-stroke:0.15px currentColor;">667</div>
<div style="position:absolute;right:486.5px;top:236.00px;font-size:11px;line-height:11px;color:#1f2937;font-weight:400;letter-spacing:0.0px;white-space:nowrap;text-align:right;-webkit-text-stroke:0.15px currentColor;">940</div>
<div style="position:absolute;right:415.5px;top:236.00px;font-size:11px;line-height:11px;color:#1f2937;font-weight:400;letter-spacing:0.0px;white-space:nowrap;text-align:right;-webkit-text-stroke:0.15px currentColor;">0</div>
<div style="position:absolute;right:368.79999999999995px;top:236.00px;font-size:11px;line-height:11px;color:#1f2937;font-weight:400;letter-spacing:0.2px;white-space:nowrap;text-align:right;-webkit-text-stroke:0.15px currentColor;">0.37%</div>
<div style="position:absolute;right:319.29999999999995px;top:236.00px;font-size:11px;line-height:11px;color:#1f2937;font-weight:400;letter-spacing:0.2px;white-space:nowrap;text-align:right;-webkit-text-stroke:0.15px currentColor;">8.70%</div>
<div style="position:absolute;right:242.29999999999995px;top:236.00px;font-size:11px;line-height:11px;color:#1f2937;font-weight:400;letter-spacing:0.2px;white-space:nowrap;text-align:right;-webkit-text-stroke:0.15px currentColor;">$1703.33</div>
<div style="position:absolute;right:178.79999999999995px;top:236.00px;font-size:11px;line-height:11px;color:#22a352;font-weight:400;letter-spacing:0.2px;white-space:nowrap;text-align:right;-webkit-text-stroke:0.15px currentColor;">$732.62</div>
<div style="position:absolute;right:116.79999999999995px;top:236.00px;font-size:11px;line-height:11px;color:#22a352;font-weight:400;letter-spacing:0.2px;white-space:nowrap;text-align:right;-webkit-text-stroke:0.15px currentColor;">75.47%</div>
<div style="position:absolute;right:15.299999999999955px;top:236.00px;font-size:11px;line-height:11px;color:#1f2937;font-weight:400;letter-spacing:0.2px;white-space:nowrap;text-align:right;-webkit-text-stroke:0.15px currentColor;">43.01%</div>
<div style="position:absolute;left:21px;top:255.93px;width:1414px;height:30.53px;background:#f8f9fb;border-top:1px solid #e6e8ec;box-sizing:border-box"></div>
<div style="position:absolute;left:9px;top:255.93px;width:12.4px;height:30.53px;background:#0ca846;border-top:1px solid rgba(255,255,255,0.6);box-sizing:border-box"></div>
<div style="position:absolute;left:12.2px;top:271.75px;width:6px;height:1.3px;background:#fff"></div>
<div style="position:absolute;left:14.55px;top:269.40px;width:1.3px;height:6px;background:#fff"></div>
<div style="position:absolute;left:28.2px;top:265.80px;width:11.2px;height:11.2px;box-sizing:border-box;border:1px solid #d8dbe0;border-radius:2.8px;background:#fff"></div>
<div style="position:absolute;left:52px;top:266.00px;font-size:11px;line-height:11px;color:#1f2937;font-weight:400;letter-spacing:0.182px;white-space:nowrap;-webkit-text-stroke:0.15px currentColor;">Facebook - CA - Clash Of Clans - Mobile</div>
<div style="position:absolute;right:1094.5px;top:266.00px;font-size:11px;line-height:11px;color:#1f2937;font-weight:400;letter-spacing:0.0px;white-space:nowrap;text-align:right;-webkit-text-stroke:0.15px currentColor;">136,814</div>
<div style="position:absolute;right:992.0px;top:266.00px;font-size:11px;line-height:11px;color:#1f2937;font-weight:400;letter-spacing:0.0px;white-space:nowrap;text-align:right;-webkit-text-stroke:0.15px currentColor;">81,640</div>
<div style="position:absolute;left:466.1px;top:268.10px;width:55.9px;height:6.4px;border-radius:3.2px;background:#3daf58;overflow:hidden"><div style="position:absolute;left:0;top:0;height:6.4px;width:7.2px;background:#fa6a0a"></div></div>
<div style="position:absolute;right:881.7px;top:266.50px;font-size:10px;line-height:10px;color:#1f2937;font-weight:400;letter-spacing:0.3px;white-space:nowrap;text-align:right;">11.5%</div>
<div style="position:absolute;right:812.5px;top:266.00px;font-size:11px;line-height:11px;color:#1f2937;font-weight:400;letter-spacing:0.0px;white-space:nowrap;text-align:right;-webkit-text-stroke:0.15px currentColor;">8,444</div>
<div style="position:absolute;right:708.0px;top:266.00px;font-size:11px;line-height:11px;color:#1f2937;font-weight:400;letter-spacing:0.0px;white-space:nowrap;text-align:right;-webkit-text-stroke:0.15px currentColor;">6,978</div>
<div style="position:absolute;right:654.8px;top:266.00px;font-size:11px;line-height:11px;color:#1f2937;font-weight:400;letter-spacing:0.2px;white-space:nowrap;text-align:right;-webkit-text-stroke:0.15px currentColor;">6.17%</div>
<div style="position:absolute;right:557.0px;top:266.00px;font-size:11px;line-height:11px;color:#1f2937;font-weight:400;letter-spacing:0.0px;white-space:nowrap;text-align:right;-webkit-text-stroke:0.15px currentColor;">614</div>
<div style="position:absolute;right:486.5px;top:266.00px;font-size:11px;line-height:11px;color:#1f2937;font-weight:400;letter-spacing:0.0px;white-space:nowrap;text-align:right;-webkit-text-stroke:0.15px currentColor;">1,360</div>
<div style="position:absolute;right:415.5px;top:266.00px;font-size:11px;line-height:11px;color:#1f2937;font-weight:400;letter-spacing:0.0px;white-space:nowrap;text-align:right;-webkit-text-stroke:0.15px currentColor;">0</div>
<div style="position:absolute;right:368.79999999999995px;top:266.00px;font-size:11px;line-height:11px;color:#1f2937;font-weight:400;letter-spacing:0.2px;white-space:nowrap;text-align:right;-webkit-text-stroke:0.15px currentColor;">0.45%</div>
<div style="position:absolute;right:319.29999999999995px;top:266.00px;font-size:11px;line-height:11px;color:#1f2937;font-weight:400;letter-spacing:0.2px;white-space:nowrap;text-align:right;-webkit-text-stroke:0.15px currentColor;">7.27%</div>
<div style="position:absolute;right:242.29999999999995px;top:266.00px;font-size:11px;line-height:11px;color:#1f2937;font-weight:400;letter-spacing:0.2px;white-space:nowrap;text-align:right;-webkit-text-stroke:0.15px currentColor;">$1404.92</div>
<div style="position:absolute;right:178.79999999999995px;top:266.00px;font-size:11px;line-height:11px;color:#22a352;font-weight:400;letter-spacing:0.2px;white-space:nowrap;text-align:right;-webkit-text-stroke:0.15px currentColor;">$664.99</div>
<div style="position:absolute;right:116.79999999999995px;top:266.00px;font-size:11px;line-height:11px;color:#22a352;font-weight:400;letter-spacing:0.2px;white-space:nowrap;text-align:right;-webkit-text-stroke:0.15px currentColor;">89.87%</div>
<div style="position:absolute;right:15.299999999999955px;top:266.00px;font-size:11px;line-height:11px;color:#1f2937;font-weight:400;letter-spacing:0.2px;white-space:nowrap;text-align:right;-webkit-text-stroke:0.15px currentColor;">47.33%</div>
<div style="position:absolute;left:21px;top:286.46px;width:1414px;height:30.53px;background:#ffffff;border-top:1px solid #e6e8ec;box-sizing:border-box"></div>
<div style="position:absolute;left:9px;top:286.46px;width:12.4px;height:30.53px;background:#0ca846;border-top:1px solid rgba(255,255,255,0.6);box-sizing:border-box"></div>
<div style="position:absolute;left:12.2px;top:302.28px;width:6px;height:1.3px;background:#fff"></div>
<div style="position:absolute;left:14.55px;top:299.93px;width:1.3px;height:6px;background:#fff"></div>
<div style="position:absolute;left:28.2px;top:296.33px;width:11.2px;height:11.2px;box-sizing:border-box;border:1px solid #d8dbe0;border-radius:2.8px;background:#fff"></div>
<div style="position:absolute;left:52px;top:297.00px;font-size:11px;line-height:11px;color:#1f2937;font-weight:400;letter-spacing:0.17px;white-space:nowrap;-webkit-text-stroke:0.15px currentColor;">Google Ads - US - Apps - CPI VPN - 3G</div>
<div style="position:absolute;right:1094.5px;top:297.00px;font-size:11px;line-height:11px;color:#1f2937;font-weight:400;letter-spacing:0.0px;white-space:nowrap;text-align:right;-webkit-text-stroke:0.15px currentColor;">88,748</div>
<div style="position:absolute;right:992.0px;top:297.00px;font-size:11px;line-height:11px;color:#1f2937;font-weight:400;letter-spacing:0.0px;white-space:nowrap;text-align:right;-webkit-text-stroke:0.15px currentColor;">58,270</div>
<div style="position:absolute;left:466.1px;top:298.63px;width:55.9px;height:6.4px;border-radius:3.2px;background:#3daf58;overflow:hidden"><div style="position:absolute;left:0;top:0;height:6.4px;width:15.1px;background:#fa6a0a"></div></div>
<div style="position:absolute;right:881.7px;top:297.50px;font-size:10px;line-height:10px;color:#1f2937;font-weight:400;letter-spacing:0.3px;white-space:nowrap;text-align:right;">25.6%</div>
<div style="position:absolute;right:812.5px;top:297.00px;font-size:11px;line-height:11px;color:#1f2937;font-weight:400;letter-spacing:0.0px;white-space:nowrap;text-align:right;-webkit-text-stroke:0.15px currentColor;">15,535</div>
<div style="position:absolute;right:708.0px;top:297.00px;font-size:11px;line-height:11px;color:#1f2937;font-weight:400;letter-spacing:0.0px;white-space:nowrap;text-align:right;-webkit-text-stroke:0.15px currentColor;">11,133</div>
<div style="position:absolute;right:654.8px;top:297.00px;font-size:11px;line-height:11px;color:#1f2937;font-weight:400;letter-spacing:0.2px;white-space:nowrap;text-align:right;-webkit-text-stroke:0.15px currentColor;">17.50%</div>
<div style="position:absolute;right:557.0px;top:297.00px;font-size:11px;line-height:11px;color:#1f2937;font-weight:400;letter-spacing:0.0px;white-space:nowrap;text-align:right;-webkit-text-stroke:0.15px currentColor;">1,265</div>
<div style="position:absolute;right:486.5px;top:297.00px;font-size:11px;line-height:11px;color:#1f2937;font-weight:400;letter-spacing:0.0px;white-space:nowrap;text-align:right;-webkit-text-stroke:0.15px currentColor;">705</div>
<div style="position:absolute;right:415.5px;top:297.00px;font-size:11px;line-height:11px;color:#1f2937;font-weight:400;letter-spacing:0.0px;white-space:nowrap;text-align:right;-webkit-text-stroke:0.15px currentColor;">794</div>
<div style="position:absolute;right:368.79999999999995px;top:297.00px;font-size:11px;line-height:11px;color:#1f2937;font-weight:400;letter-spacing:0.2px;white-space:nowrap;text-align:right;-webkit-text-stroke:0.15px currentColor;">1.43%</div>
<div style="position:absolute;right:319.29999999999995px;top:297.00px;font-size:11px;line-height:11px;color:#1f2937;font-weight:400;letter-spacing:0.2px;white-space:nowrap;text-align:right;-webkit-text-stroke:0.15px currentColor;">8.14%</div>
<div style="position:absolute;right:242.29999999999995px;top:297.00px;font-size:11px;line-height:11px;color:#1f2937;font-weight:400;letter-spacing:0.2px;white-space:nowrap;text-align:right;-webkit-text-stroke:0.15px currentColor;">$1502.69</div>
<div style="position:absolute;right:178.79999999999995px;top:297.00px;font-size:11px;line-height:11px;color:#22a352;font-weight:400;letter-spacing:0.2px;white-space:nowrap;text-align:right;-webkit-text-stroke:0.15px currentColor;">$578.12</div>
<div style="position:absolute;right:116.79999999999995px;top:297.00px;font-size:11px;line-height:11px;color:#22a352;font-weight:400;letter-spacing:0.2px;white-space:nowrap;text-align:right;-webkit-text-stroke:0.15px currentColor;">62.53%</div>
<div style="position:absolute;right:15.299999999999955px;top:297.00px;font-size:11px;line-height:11px;color:#1f2937;font-weight:400;letter-spacing:0.2px;white-space:nowrap;text-align:right;-webkit-text-stroke:0.15px currentColor;">38.47%</div>
<div style="position:absolute;left:21px;top:316.99px;width:1414px;height:30.53px;background:#f8f9fb;border-top:1px solid #e6e8ec;box-sizing:border-box"></div>
<div style="position:absolute;left:9px;top:316.99px;width:12.4px;height:30.53px;background:#e6000f;border-top:1px solid rgba(255,255,255,0.6);box-sizing:border-box"></div>
<div style="position:absolute;left:13px;top:332.71px;width:4.3px;height:1.4px;border-radius:0.7px;background:#fff"></div>
<div style="position:absolute;left:28.2px;top:326.86px;width:11.2px;height:11.2px;box-sizing:border-box;border:1px solid #d8dbe0;border-radius:2.8px;background:#fff"></div>
<div style="position:absolute;left:52px;top:327.00px;font-size:11px;line-height:11px;color:#1f2937;font-weight:400;letter-spacing:0.162px;white-space:nowrap;-webkit-text-stroke:0.15px currentColor;">PropellerAds - Pop - ES - Apps - Flower</div>
<div style="position:absolute;right:1094.5px;top:327.00px;font-size:11px;line-height:11px;color:#1f2937;font-weight:400;letter-spacing:0.0px;white-space:nowrap;text-align:right;-webkit-text-stroke:0.15px currentColor;">53,874</div>
<div style="position:absolute;right:992.0px;top:327.00px;font-size:11px;line-height:11px;color:#1f2937;font-weight:400;letter-spacing:0.0px;white-space:nowrap;text-align:right;-webkit-text-stroke:0.15px currentColor;">29,703</div>
<div style="position:absolute;left:466.1px;top:329.16px;width:55.9px;height:6.4px;border-radius:3.2px;background:#3daf58;overflow:hidden"><div style="position:absolute;left:0;top:0;height:6.4px;width:4.3px;background:#fa6a0a"></div></div>
<div style="position:absolute;right:881.7px;top:327.50px;font-size:10px;line-height:10px;color:#1f2937;font-weight:400;letter-spacing:0.3px;white-space:nowrap;text-align:right;">6.3%</div>
<div style="position:absolute;right:812.5px;top:327.00px;font-size:11px;line-height:11px;color:#1f2937;font-weight:400;letter-spacing:0.0px;white-space:nowrap;text-align:right;-webkit-text-stroke:0.15px currentColor;">343</div>
<div style="position:absolute;right:708.0px;top:327.00px;font-size:11px;line-height:11px;color:#1f2937;font-weight:400;letter-spacing:0.0px;white-space:nowrap;text-align:right;-webkit-text-stroke:0.15px currentColor;">251</div>
<div style="position:absolute;right:654.8px;top:327.00px;font-size:11px;line-height:11px;color:#1f2937;font-weight:400;letter-spacing:0.2px;white-space:nowrap;text-align:right;-webkit-text-stroke:0.15px currentColor;">0.64%</div>
<div style="position:absolute;right:557.0px;top:327.00px;font-size:11px;line-height:11px;color:#1f2937;font-weight:400;letter-spacing:0.0px;white-space:nowrap;text-align:right;-webkit-text-stroke:0.15px currentColor;">4</div>
<div style="position:absolute;right:486.5px;top:327.00px;font-size:11px;line-height:11px;color:#1f2937;font-weight:400;letter-spacing:0.0px;white-space:nowrap;text-align:right;-webkit-text-stroke:0.15px currentColor;">0</div>
<div style="position:absolute;right:415.5px;top:327.00px;font-size:11px;line-height:11px;color:#1f2937;font-weight:400;letter-spacing:0.0px;white-space:nowrap;text-align:right;-webkit-text-stroke:0.15px currentColor;">0</div>
<div style="position:absolute;right:368.79999999999995px;top:327.00px;font-size:11px;line-height:11px;color:#1f2937;font-weight:400;letter-spacing:0.2px;white-space:nowrap;text-align:right;-webkit-text-stroke:0.15px currentColor;">0.01%</div>
<div style="position:absolute;right:319.29999999999995px;top:327.00px;font-size:11px;line-height:11px;color:#1f2937;font-weight:400;letter-spacing:0.2px;white-space:nowrap;text-align:right;-webkit-text-stroke:0.15px currentColor;">1.17%</div>
<div style="position:absolute;right:242.29999999999995px;top:327.00px;font-size:11px;line-height:11px;color:#1f2937;font-weight:400;letter-spacing:0.2px;white-space:nowrap;text-align:right;-webkit-text-stroke:0.15px currentColor;">$0.00</div>
<div style="position:absolute;right:178.54999999999995px;top:327.00px;font-size:11px;line-height:11px;color:#dc2626;font-weight:400;letter-spacing:0.45px;white-space:nowrap;text-align:right;-webkit-text-stroke:0.15px currentColor;">$-31.75</div>
<div style="position:absolute;right:116.54999999999995px;top:327.00px;font-size:11px;line-height:11px;color:#dc2626;font-weight:400;letter-spacing:0.45px;white-space:nowrap;text-align:right;-webkit-text-stroke:0.15px currentColor;">-100.00%</div>
<div style="position:absolute;right:15.299999999999955px;top:327.00px;font-size:11px;line-height:11px;color:#1f2937;font-weight:400;letter-spacing:0.2px;white-space:nowrap;text-align:right;-webkit-text-stroke:0.15px currentColor;">0.00%</div>
<div style="position:absolute;left:21px;top:347.52px;width:1414px;height:30.53px;background:#ffffff;border-top:1px solid #e6e8ec;box-sizing:border-box"></div>
<div style="position:absolute;left:9px;top:347.52px;width:12.4px;height:30.53px;background:#0ca846;border-top:1px solid rgba(255,255,255,0.6);box-sizing:border-box"></div>
<div style="position:absolute;left:12.2px;top:363.34px;width:6px;height:1.3px;background:#fff"></div>
<div style="position:absolute;left:14.55px;top:360.99px;width:1.3px;height:6px;background:#fff"></div>
<div style="position:absolute;left:28.2px;top:357.39px;width:11.2px;height:11.2px;box-sizing:border-box;border:1px solid #d8dbe0;border-radius:2.8px;background:#fff"></div>
<div style="position:absolute;left:52px;top:358.00px;font-size:11px;line-height:11px;color:#1f2937;font-weight:400;letter-spacing:0.238px;white-space:nowrap;-webkit-text-stroke:0.15px currentColor;">TikTok - GB - McAfee - Mobile - Trends</div>
<div style="position:absolute;right:1094.5px;top:358.00px;font-size:11px;line-height:11px;color:#1f2937;font-weight:400;letter-spacing:0.0px;white-space:nowrap;text-align:right;-webkit-text-stroke:0.15px currentColor;">35,802</div>
<div style="position:absolute;right:992.0px;top:358.00px;font-size:11px;line-height:11px;color:#1f2937;font-weight:400;letter-spacing:0.0px;white-space:nowrap;text-align:right;-webkit-text-stroke:0.15px currentColor;">26,167</div>
<div style="position:absolute;left:466.1px;top:359.69px;width:55.9px;height:6.4px;border-radius:3.2px;background:#3daf58;overflow:hidden"><div style="position:absolute;left:0;top:0;height:6.4px;width:7.7px;background:#fa6a0a"></div></div>
<div style="position:absolute;right:881.7px;top:358.50px;font-size:10px;line-height:10px;color:#1f2937;font-weight:400;letter-spacing:0.3px;white-space:nowrap;text-align:right;">12.4%</div>
<div style="position:absolute;right:812.5px;top:358.00px;font-size:11px;line-height:11px;color:#1f2937;font-weight:400;letter-spacing:0.0px;white-space:nowrap;text-align:right;-webkit-text-stroke:0.15px currentColor;">2,466</div>
<div style="position:absolute;right:708.0px;top:358.00px;font-size:11px;line-height:11px;color:#1f2937;font-weight:400;letter-spacing:0.0px;white-space:nowrap;text-align:right;-webkit-text-stroke:0.15px currentColor;">1,980</div>
<div style="position:absolute;right:654.8px;top:358.00px;font-size:11px;line-height:11px;color:#1f2937;font-weight:400;letter-spacing:0.2px;white-space:nowrap;text-align:right;-webkit-text-stroke:0.15px currentColor;">6.89%</div>
<div style="position:absolute;right:557.0px;top:358.00px;font-size:11px;line-height:11px;color:#1f2937;font-weight:400;letter-spacing:0.0px;white-space:nowrap;text-align:right;-webkit-text-stroke:0.15px currentColor;">211</div>
<div style="position:absolute;right:486.5px;top:358.00px;font-size:11px;line-height:11px;color:#1f2937;font-weight:400;letter-spacing:0.0px;white-space:nowrap;text-align:right;-webkit-text-stroke:0.15px currentColor;">226</div>
<div style="position:absolute;right:415.5px;top:358.00px;font-size:11px;line-height:11px;color:#1f2937;font-weight:400;letter-spacing:0.0px;white-space:nowrap;text-align:right;-webkit-text-stroke:0.15px currentColor;">0</div>
<div style="position:absolute;right:368.79999999999995px;top:358.00px;font-size:11px;line-height:11px;color:#1f2937;font-weight:400;letter-spacing:0.2px;white-space:nowrap;text-align:right;-webkit-text-stroke:0.15px currentColor;">0.59%</div>
<div style="position:absolute;right:319.29999999999995px;top:358.00px;font-size:11px;line-height:11px;color:#1f2937;font-weight:400;letter-spacing:0.2px;white-space:nowrap;text-align:right;-webkit-text-stroke:0.15px currentColor;">8.56%</div>
<div style="position:absolute;right:242.29999999999995px;top:358.00px;font-size:11px;line-height:11px;color:#1f2937;font-weight:400;letter-spacing:0.2px;white-space:nowrap;text-align:right;-webkit-text-stroke:0.15px currentColor;">$358.00</div>
<div style="position:absolute;right:178.79999999999995px;top:358.00px;font-size:11px;line-height:11px;color:#22a352;font-weight:400;letter-spacing:0.2px;white-space:nowrap;text-align:right;-webkit-text-stroke:0.15px currentColor;">$160.60</div>
<div style="position:absolute;right:116.79999999999995px;top:358.00px;font-size:11px;line-height:11px;color:#22a352;font-weight:400;letter-spacing:0.2px;white-space:nowrap;text-align:right;-webkit-text-stroke:0.15px currentColor;">81.36%</div>
<div style="position:absolute;right:15.299999999999955px;top:358.00px;font-size:11px;line-height:11px;color:#1f2937;font-weight:400;letter-spacing:0.2px;white-space:nowrap;text-align:right;-webkit-text-stroke:0.15px currentColor;">44.86%</div>
<div style="position:absolute;left:21px;top:378.05px;width:1414px;height:30.53px;background:#f8f9fb;border-top:1px solid #e6e8ec;box-sizing:border-box"></div>
<div style="position:absolute;left:9px;top:378.05px;width:12.4px;height:30.53px;background:#0ca846;border-top:1px solid rgba(255,255,255,0.6);box-sizing:border-box"></div>
<div style="position:absolute;left:12.2px;top:393.87px;width:6px;height:1.3px;background:#fff"></div>
<div style="position:absolute;left:14.55px;top:391.52px;width:1.3px;height:6px;background:#fff"></div>
<div style="position:absolute;left:28.2px;top:387.92px;width:11.2px;height:11.2px;box-sizing:border-box;border:1px solid #d8dbe0;border-radius:2.8px;background:#fff"></div>
<div style="position:absolute;left:52px;top:388.00px;font-size:11px;line-height:11px;color:#1f2937;font-weight:400;letter-spacing:0.265px;white-space:nowrap;-webkit-text-stroke:0.15px currentColor;">TikTok - GB - McAfee - Mobile - Smart</div>
<div style="position:absolute;right:1094.5px;top:388.00px;font-size:11px;line-height:11px;color:#1f2937;font-weight:400;letter-spacing:0.0px;white-space:nowrap;text-align:right;-webkit-text-stroke:0.15px currentColor;">23,401</div>
<div style="position:absolute;right:992.0px;top:388.00px;font-size:11px;line-height:11px;color:#1f2937;font-weight:400;letter-spacing:0.0px;white-space:nowrap;text-align:right;-webkit-text-stroke:0.15px currentColor;">15,894</div>
<div style="position:absolute;left:466.1px;top:390.22px;width:55.9px;height:6.4px;border-radius:3.2px;background:#3daf58;overflow:hidden"><div style="position:absolute;left:0;top:0;height:6.4px;width:2.2px;background:#fa6a0a"></div></div>
<div style="position:absolute;right:881.7px;top:388.50px;font-size:10px;line-height:10px;color:#1f2937;font-weight:400;letter-spacing:0.3px;white-space:nowrap;text-align:right;">0.2%</div>
<div style="position:absolute;right:812.5px;top:388.00px;font-size:11px;line-height:11px;color:#1f2937;font-weight:400;letter-spacing:0.0px;white-space:nowrap;text-align:right;-webkit-text-stroke:0.15px currentColor;">1,067</div>
<div style="position:absolute;right:708.0px;top:388.00px;font-size:11px;line-height:11px;color:#1f2937;font-weight:400;letter-spacing:0.0px;white-space:nowrap;text-align:right;-webkit-text-stroke:0.15px currentColor;">957</div>
<div style="position:absolute;right:654.8px;top:388.00px;font-size:11px;line-height:11px;color:#1f2937;font-weight:400;letter-spacing:0.2px;white-space:nowrap;text-align:right;-webkit-text-stroke:0.15px currentColor;">4.56%</div>
<div style="position:absolute;right:557.0px;top:388.00px;font-size:11px;line-height:11px;color:#1f2937;font-weight:400;letter-spacing:0.0px;white-space:nowrap;text-align:right;-webkit-text-stroke:0.15px currentColor;">38</div>
<div style="position:absolute;right:486.5px;top:388.00px;font-size:11px;line-height:11px;color:#1f2937;font-weight:400;letter-spacing:0.0px;white-space:nowrap;text-align:right;-webkit-text-stroke:0.15px currentColor;">86</div>
<div style="position:absolute;right:415.5px;top:388.00px;font-size:11px;line-height:11px;color:#1f2937;font-weight:400;letter-spacing:0.0px;white-space:nowrap;text-align:right;-webkit-text-stroke:0.15px currentColor;">0</div>
<div style="position:absolute;right:368.79999999999995px;top:388.00px;font-size:11px;line-height:11px;color:#1f2937;font-weight:400;letter-spacing:0.2px;white-space:nowrap;text-align:right;-webkit-text-stroke:0.15px currentColor;">0.16%</div>
<div style="position:absolute;right:319.29999999999995px;top:388.00px;font-size:11px;line-height:11px;color:#1f2937;font-weight:400;letter-spacing:0.2px;white-space:nowrap;text-align:right;-webkit-text-stroke:0.15px currentColor;">3.56%</div>
<div style="position:absolute;right:242.29999999999995px;top:388.00px;font-size:11px;line-height:11px;color:#1f2937;font-weight:400;letter-spacing:0.2px;white-space:nowrap;text-align:right;-webkit-text-stroke:0.15px currentColor;">$187.69</div>
<div style="position:absolute;right:178.79999999999995px;top:388.00px;font-size:11px;line-height:11px;color:#22a352;font-weight:400;letter-spacing:0.2px;white-space:nowrap;text-align:right;-webkit-text-stroke:0.15px currentColor;">$92.59</div>
<div style="position:absolute;right:116.79999999999995px;top:388.00px;font-size:11px;line-height:11px;color:#22a352;font-weight:400;letter-spacing:0.2px;white-space:nowrap;text-align:right;-webkit-text-stroke:0.15px currentColor;">97.37%</div>
<div style="position:absolute;right:15.299999999999955px;top:388.00px;font-size:11px;line-height:11px;color:#1f2937;font-weight:400;letter-spacing:0.2px;white-space:nowrap;text-align:right;-webkit-text-stroke:0.15px currentColor;">49.33%</div>
<div style="position:absolute;left:21px;top:408.58px;width:1414px;height:30.53px;background:#ffffff;border-top:1px solid #e6e8ec;box-sizing:border-box"></div>
<div style="position:absolute;left:9px;top:408.58px;width:12.4px;height:30.53px;background:#0ca846;border-top:1px solid rgba(255,255,255,0.6);box-sizing:border-box"></div>
<div style="position:absolute;left:12.2px;top:424.40px;width:6px;height:1.3px;background:#fff"></div>
<div style="position:absolute;left:14.55px;top:422.05px;width:1.3px;height:6px;background:#fff"></div>
<div style="position:absolute;left:28.2px;top:418.45px;width:11.2px;height:11.2px;box-sizing:border-box;border:1px solid #d8dbe0;border-radius:2.8px;background:#fff"></div>
<div style="position:absolute;left:52px;top:419.00px;font-size:11px;line-height:11px;color:#1f2937;font-weight:400;letter-spacing:0.225px;white-space:nowrap;-webkit-text-stroke:0.15px currentColor;">Google Ads - FR - Sleep - Mobile - 3g</div>
<div style="position:absolute;right:1094.5px;top:419.00px;font-size:11px;line-height:11px;color:#1f2937;font-weight:400;letter-spacing:0.0px;white-space:nowrap;text-align:right;-webkit-text-stroke:0.15px currentColor;">15,461</div>
<div style="position:absolute;right:992.0px;top:419.00px;font-size:11px;line-height:11px;color:#1f2937;font-weight:400;letter-spacing:0.0px;white-space:nowrap;text-align:right;-webkit-text-stroke:0.15px currentColor;">10,883</div>
<div style="position:absolute;left:466.1px;top:420.75px;width:55.9px;height:6.4px;border-radius:3.2px;background:#3daf58;overflow:hidden"><div style="position:absolute;left:0;top:0;height:6.4px;width:2.2px;background:#fa6a0a"></div></div>
<div style="position:absolute;right:881.7px;top:419.50px;font-size:10px;line-height:10px;color:#1f2937;font-weight:400;letter-spacing:0.3px;white-space:nowrap;text-align:right;">2.1%</div>
<div style="position:absolute;right:812.5px;top:419.00px;font-size:11px;line-height:11px;color:#1f2937;font-weight:400;letter-spacing:0.0px;white-space:nowrap;text-align:right;-webkit-text-stroke:0.15px currentColor;">2,332</div>
<div style="position:absolute;right:708.0px;top:419.00px;font-size:11px;line-height:11px;color:#1f2937;font-weight:400;letter-spacing:0.0px;white-space:nowrap;text-align:right;-webkit-text-stroke:0.15px currentColor;">1,651</div>
<div style="position:absolute;right:654.8px;top:419.00px;font-size:11px;line-height:11px;color:#1f2937;font-weight:400;letter-spacing:0.2px;white-space:nowrap;text-align:right;-webkit-text-stroke:0.15px currentColor;">15.08%</div>
<div style="position:absolute;right:557.0px;top:419.00px;font-size:11px;line-height:11px;color:#1f2937;font-weight:400;letter-spacing:0.0px;white-space:nowrap;text-align:right;-webkit-text-stroke:0.15px currentColor;">298</div>
<div style="position:absolute;right:486.5px;top:419.00px;font-size:11px;line-height:11px;color:#1f2937;font-weight:400;letter-spacing:0.0px;white-space:nowrap;text-align:right;-webkit-text-stroke:0.15px currentColor;">164</div>
<div style="position:absolute;right:415.5px;top:419.00px;font-size:11px;line-height:11px;color:#1f2937;font-weight:400;letter-spacing:0.0px;white-space:nowrap;text-align:right;-webkit-text-stroke:0.15px currentColor;">0</div>
<div style="position:absolute;right:368.79999999999995px;top:419.00px;font-size:11px;line-height:11px;color:#1f2937;font-weight:400;letter-spacing:0.2px;white-space:nowrap;text-align:right;-webkit-text-stroke:0.15px currentColor;">1.93%</div>
<div style="position:absolute;right:319.29999999999995px;top:419.00px;font-size:11px;line-height:11px;color:#1f2937;font-weight:400;letter-spacing:0.2px;white-space:nowrap;text-align:right;-webkit-text-stroke:0.15px currentColor;">12.78%</div>
<div style="position:absolute;right:242.29999999999995px;top:419.00px;font-size:11px;line-height:11px;color:#1f2937;font-weight:400;letter-spacing:0.2px;white-space:nowrap;text-align:right;-webkit-text-stroke:0.15px currentColor;">$210.64</div>
<div style="position:absolute;right:178.79999999999995px;top:419.00px;font-size:11px;line-height:11px;color:#22a352;font-weight:400;letter-spacing:0.2px;white-space:nowrap;text-align:right;-webkit-text-stroke:0.15px currentColor;">$94.24</div>
<div style="position:absolute;right:116.79999999999995px;top:419.00px;font-size:11px;line-height:11px;color:#22a352;font-weight:400;letter-spacing:0.2px;white-space:nowrap;text-align:right;-webkit-text-stroke:0.15px currentColor;">80.96%</div>
<div style="position:absolute;right:15.299999999999955px;top:419.00px;font-size:11px;line-height:11px;color:#1f2937;font-weight:400;letter-spacing:0.2px;white-space:nowrap;text-align:right;-webkit-text-stroke:0.15px currentColor;">44.74%</div>
<div style="position:absolute;left:21px;top:439.11px;width:1414px;height:30.53px;background:#f8f9fb;border-top:1px solid #e6e8ec;box-sizing:border-box"></div>
<div style="position:absolute;left:9px;top:439.11px;width:12.4px;height:30.53px;background:#e6000f;border-top:1px solid rgba(255,255,255,0.6);box-sizing:border-box"></div>
<div style="position:absolute;left:13px;top:454.83px;width:4.3px;height:1.4px;border-radius:0.7px;background:#fff"></div>
<div style="position:absolute;left:28.2px;top:448.98px;width:11.2px;height:11.2px;box-sizing:border-box;border:1px solid #d8dbe0;border-radius:2.8px;background:#fff"></div>
<div style="position:absolute;left:52px;top:450.00px;font-size:11px;line-height:11px;color:#1f2937;font-weight:400;letter-spacing:0.137px;white-space:nowrap;-webkit-text-stroke:0.15px currentColor;">AD - DE - CPI - BlueRewards - Mobile</div>
<div style="position:absolute;right:1094.5px;top:450.00px;font-size:11px;line-height:11px;color:#1f2937;font-weight:400;letter-spacing:0.0px;white-space:nowrap;text-align:right;-webkit-text-stroke:0.15px currentColor;">10,782</div>
<div style="position:absolute;right:992.0px;top:450.00px;font-size:11px;line-height:11px;color:#1f2937;font-weight:400;letter-spacing:0.0px;white-space:nowrap;text-align:right;-webkit-text-stroke:0.15px currentColor;">8,043</div>
<div style="position:absolute;left:466.1px;top:451.28px;width:55.9px;height:6.4px;border-radius:3.2px;background:#3daf58;overflow:hidden"><div style="position:absolute;left:0;top:0;height:6.4px;width:2.9px;background:#fa6a0a"></div></div>
<div style="position:absolute;right:881.7px;top:450.50px;font-size:10px;line-height:10px;color:#1f2937;font-weight:400;letter-spacing:0.3px;white-space:nowrap;text-align:right;">3.7%</div>
<div style="position:absolute;right:812.5px;top:450.00px;font-size:11px;line-height:11px;color:#1f2937;font-weight:400;letter-spacing:0.0px;white-space:nowrap;text-align:right;-webkit-text-stroke:0.15px currentColor;">325</div>
<div style="position:absolute;right:708.0px;top:450.00px;font-size:11px;line-height:11px;color:#1f2937;font-weight:400;letter-spacing:0.0px;white-space:nowrap;text-align:right;-webkit-text-stroke:0.15px currentColor;">275</div>
<div style="position:absolute;right:654.8px;top:450.00px;font-size:11px;line-height:11px;color:#1f2937;font-weight:400;letter-spacing:0.2px;white-space:nowrap;text-align:right;-webkit-text-stroke:0.15px currentColor;">3.01%</div>
<div style="position:absolute;right:557.0px;top:450.00px;font-size:11px;line-height:11px;color:#1f2937;font-weight:400;letter-spacing:0.0px;white-space:nowrap;text-align:right;-webkit-text-stroke:0.15px currentColor;">2</div>
<div style="position:absolute;right:486.5px;top:450.00px;font-size:11px;line-height:11px;color:#1f2937;font-weight:400;letter-spacing:0.0px;white-space:nowrap;text-align:right;-webkit-text-stroke:0.15px currentColor;">4</div>
<div style="position:absolute;right:415.5px;top:450.00px;font-size:11px;line-height:11px;color:#1f2937;font-weight:400;letter-spacing:0.0px;white-space:nowrap;text-align:right;-webkit-text-stroke:0.15px currentColor;">0</div>
<div style="position:absolute;right:368.79999999999995px;top:450.00px;font-size:11px;line-height:11px;color:#1f2937;font-weight:400;letter-spacing:0.2px;white-space:nowrap;text-align:right;-webkit-text-stroke:0.15px currentColor;">0.02%</div>
<div style="position:absolute;right:319.29999999999995px;top:450.00px;font-size:11px;line-height:11px;color:#1f2937;font-weight:400;letter-spacing:0.2px;white-space:nowrap;text-align:right;-webkit-text-stroke:0.15px currentColor;">0.62%</div>
<div style="position:absolute;right:242.29999999999995px;top:450.00px;font-size:11px;line-height:11px;color:#1f2937;font-weight:400;letter-spacing:0.2px;white-space:nowrap;text-align:right;-webkit-text-stroke:0.15px currentColor;">$1.00</div>
<div style="position:absolute;right:178.54999999999995px;top:450.00px;font-size:11px;line-height:11px;color:#dc2626;font-weight:400;letter-spacing:0.45px;white-space:nowrap;text-align:right;-webkit-text-stroke:0.15px currentColor;">$-4.00</div>
<div style="position:absolute;right:116.54999999999995px;top:450.00px;font-size:11px;line-height:11px;color:#dc2626;font-weight:400;letter-spacing:0.45px;white-space:nowrap;text-align:right;-webkit-text-stroke:0.15px currentColor;">-80.02%</div>
<div style="position:absolute;right:15.049999999999955px;top:450.00px;font-size:11px;line-height:11px;color:#1f2937;font-weight:400;letter-spacing:0.45px;white-space:nowrap;text-align:right;-webkit-text-stroke:0.15px currentColor;">-400.45%</div>
<div style="position:absolute;left:21px;top:469.64px;width:1414px;height:30.53px;background:#ffffff;border-top:1px solid #e6e8ec;box-sizing:border-box"></div>
<div style="position:absolute;left:9px;top:469.64px;width:12.4px;height:30.53px;background:#0ca846;border-top:1px solid rgba(255,255,255,0.6);box-sizing:border-box"></div>
<div style="position:absolute;left:12.2px;top:485.46px;width:6px;height:1.3px;background:#fff"></div>
<div style="position:absolute;left:14.55px;top:483.11px;width:1.3px;height:6px;background:#fff"></div>
<div style="position:absolute;left:28.2px;top:479.51px;width:11.2px;height:11.2px;box-sizing:border-box;border:1px solid #d8dbe0;border-radius:2.8px;background:#fff"></div>
<div style="position:absolute;left:52px;top:480.00px;font-size:11px;line-height:11px;color:#1f2937;font-weight:400;letter-spacing:0.214px;white-space:nowrap;-webkit-text-stroke:0.15px currentColor;">PopAds - PL - CPA - Dating - Desktop</div>
<div style="position:absolute;right:1094.5px;top:480.00px;font-size:11px;line-height:11px;color:#1f2937;font-weight:400;letter-spacing:0.0px;white-space:nowrap;text-align:right;-webkit-text-stroke:0.15px currentColor;">5,183</div>
<div style="position:absolute;right:992.0px;top:480.00px;font-size:11px;line-height:11px;color:#1f2937;font-weight:400;letter-spacing:0.0px;white-space:nowrap;text-align:right;-webkit-text-stroke:0.15px currentColor;">4,361</div>
<div style="position:absolute;left:466.1px;top:481.81px;width:55.9px;height:6.4px;border-radius:3.2px;background:#3daf58;overflow:hidden"><div style="position:absolute;left:0;top:0;height:6.4px;width:2.2px;background:#fa6a0a"></div></div>
<div style="position:absolute;right:881.7px;top:480.50px;font-size:10px;line-height:10px;color:#1f2937;font-weight:400;letter-spacing:0.3px;white-space:nowrap;text-align:right;">2.1%</div>
<div style="position:absolute;right:812.5px;top:480.00px;font-size:11px;line-height:11px;color:#1f2937;font-weight:400;letter-spacing:0.0px;white-space:nowrap;text-align:right;-webkit-text-stroke:0.15px currentColor;">253</div>
<div style="position:absolute;right:708.0px;top:480.00px;font-size:11px;line-height:11px;color:#1f2937;font-weight:400;letter-spacing:0.0px;white-space:nowrap;text-align:right;-webkit-text-stroke:0.15px currentColor;">185</div>
<div style="position:absolute;right:654.8px;top:480.00px;font-size:11px;line-height:11px;color:#1f2937;font-weight:400;letter-spacing:0.2px;white-space:nowrap;text-align:right;-webkit-text-stroke:0.15px currentColor;">4.88%</div>
<div style="position:absolute;right:557.0px;top:480.00px;font-size:11px;line-height:11px;color:#1f2937;font-weight:400;letter-spacing:0.0px;white-space:nowrap;text-align:right;-webkit-text-stroke:0.15px currentColor;">22</div>
<div style="position:absolute;right:486.5px;top:480.00px;font-size:11px;line-height:11px;color:#1f2937;font-weight:400;letter-spacing:0.0px;white-space:nowrap;text-align:right;-webkit-text-stroke:0.15px currentColor;">57</div>
<div style="position:absolute;right:415.5px;top:480.00px;font-size:11px;line-height:11px;color:#1f2937;font-weight:400;letter-spacing:0.0px;white-space:nowrap;text-align:right;-webkit-text-stroke:0.15px currentColor;">0</div>
<div style="position:absolute;right:368.79999999999995px;top:480.00px;font-size:11px;line-height:11px;color:#1f2937;font-weight:400;letter-spacing:0.2px;white-space:nowrap;text-align:right;-webkit-text-stroke:0.15px currentColor;">0.42%</div>
<div style="position:absolute;right:319.29999999999995px;top:480.00px;font-size:11px;line-height:11px;color:#1f2937;font-weight:400;letter-spacing:0.2px;white-space:nowrap;text-align:right;-webkit-text-stroke:0.15px currentColor;">8.70%</div>
<div style="position:absolute;right:242.29999999999995px;top:480.00px;font-size:11px;line-height:11px;color:#1f2937;font-weight:400;letter-spacing:0.2px;white-space:nowrap;text-align:right;-webkit-text-stroke:0.15px currentColor;">$32.51</div>
<div style="position:absolute;right:178.79999999999995px;top:480.00px;font-size:11px;line-height:11px;color:#22a352;font-weight:400;letter-spacing:0.2px;white-space:nowrap;text-align:right;-webkit-text-stroke:0.15px currentColor;">$14.71</div>
<div style="position:absolute;right:116.79999999999995px;top:480.00px;font-size:11px;line-height:11px;color:#22a352;font-weight:400;letter-spacing:0.2px;white-space:nowrap;text-align:right;-webkit-text-stroke:0.15px currentColor;">82.60%</div>
<div style="position:absolute;right:15.299999999999955px;top:480.00px;font-size:11px;line-height:11px;color:#1f2937;font-weight:400;letter-spacing:0.2px;white-space:nowrap;text-align:right;-webkit-text-stroke:0.15px currentColor;">45.24%</div>
<div style="position:absolute;left:21px;top:500.17px;width:1414px;height:30.53px;background:#f8f9fb;border-top:1px solid #e6e8ec;box-sizing:border-box"></div>
<div style="position:absolute;left:9px;top:500.17px;width:12.4px;height:30.53px;background:#0ca846;border-top:1px solid rgba(255,255,255,0.6);box-sizing:border-box"></div>
<div style="position:absolute;left:12.2px;top:515.99px;width:6px;height:1.3px;background:#fff"></div>
<div style="position:absolute;left:14.55px;top:513.64px;width:1.3px;height:6px;background:#fff"></div>
<div style="position:absolute;left:28.2px;top:510.04px;width:11.2px;height:11.2px;box-sizing:border-box;border:1px solid #d8dbe0;border-radius:2.8px;background:#fff"></div>
<div style="position:absolute;left:52px;top:511.00px;font-size:11px;line-height:11px;color:#1f2937;font-weight:400;letter-spacing:0.282px;white-space:nowrap;-webkit-text-stroke:0.15px currentColor;">TrafficBack - Global - MagicButton</div>
<div style="position:absolute;right:1094.5px;top:511.00px;font-size:11px;line-height:11px;color:#1f2937;font-weight:400;letter-spacing:0.0px;white-space:nowrap;text-align:right;-webkit-text-stroke:0.15px currentColor;">2,108</div>
<div style="position:absolute;right:992.0px;top:511.00px;font-size:11px;line-height:11px;color:#1f2937;font-weight:400;letter-spacing:0.0px;white-space:nowrap;text-align:right;-webkit-text-stroke:0.15px currentColor;">1,603</div>
<div style="position:absolute;left:466.1px;top:512.34px;width:55.9px;height:6.4px;border-radius:3.2px;background:#3daf58;overflow:hidden"><div style="position:absolute;left:0;top:0;height:6.4px;width:39.8px;background:#fa6a0a"></div></div>
<div style="position:absolute;right:881.7px;top:511.50px;font-size:10px;line-height:10px;color:#1f2937;font-weight:400;letter-spacing:0.3px;white-space:nowrap;text-align:right;">69.6%</div>
<div style="position:absolute;right:812.5px;top:511.00px;font-size:11px;line-height:11px;color:#1f2937;font-weight:400;letter-spacing:0.0px;white-space:nowrap;text-align:right;-webkit-text-stroke:0.15px currentColor;">0</div>
<div style="position:absolute;right:708.0px;top:511.00px;font-size:11px;line-height:11px;color:#1f2937;font-weight:400;letter-spacing:0.0px;white-space:nowrap;text-align:right;-webkit-text-stroke:0.15px currentColor;">0</div>
<div style="position:absolute;right:654.8px;top:511.00px;font-size:11px;line-height:11px;color:#1f2937;font-weight:400;letter-spacing:0.2px;white-space:nowrap;text-align:right;-webkit-text-stroke:0.15px currentColor;">0.00%</div>
<div style="position:absolute;right:557.0px;top:511.00px;font-size:11px;line-height:11px;color:#1f2937;font-weight:400;letter-spacing:0.0px;white-space:nowrap;text-align:right;-webkit-text-stroke:0.15px currentColor;">3</div>
<div style="position:absolute;right:486.5px;top:511.00px;font-size:11px;line-height:11px;color:#1f2937;font-weight:400;letter-spacing:0.0px;white-space:nowrap;text-align:right;-webkit-text-stroke:0.15px currentColor;">0</div>
<div style="position:absolute;right:415.5px;top:511.00px;font-size:11px;line-height:11px;color:#1f2937;font-weight:400;letter-spacing:0.0px;white-space:nowrap;text-align:right;-webkit-text-stroke:0.15px currentColor;">0</div>
<div style="position:absolute;right:368.79999999999995px;top:511.00px;font-size:11px;line-height:11px;color:#1f2937;font-weight:400;letter-spacing:0.2px;white-space:nowrap;text-align:right;-webkit-text-stroke:0.15px currentColor;">0.14%</div>
<div style="position:absolute;right:319.29999999999995px;top:511.00px;font-size:11px;line-height:11px;color:#1f2937;font-weight:400;letter-spacing:0.2px;white-space:nowrap;text-align:right;-webkit-text-stroke:0.15px currentColor;">0.00%</div>
<div style="position:absolute;right:242.29999999999995px;top:511.00px;font-size:11px;line-height:11px;color:#1f2937;font-weight:400;letter-spacing:0.2px;white-space:nowrap;text-align:right;-webkit-text-stroke:0.15px currentColor;">$0.52</div>
<div style="position:absolute;right:178.79999999999995px;top:511.00px;font-size:11px;line-height:11px;color:#22a352;font-weight:400;letter-spacing:0.2px;white-space:nowrap;text-align:right;-webkit-text-stroke:0.15px currentColor;">$0.52</div>
<div style="position:absolute;right:116.79999999999995px;top:511.00px;font-size:11px;line-height:11px;color:#1f2937;font-weight:400;letter-spacing:0.2px;white-space:nowrap;text-align:right;-webkit-text-stroke:0.15px currentColor;">0.00%</div>
<div style="position:absolute;right:15.299999999999955px;top:511.00px;font-size:11px;line-height:11px;color:#1f2937;font-weight:400;letter-spacing:0.2px;white-space:nowrap;text-align:right;-webkit-text-stroke:0.15px currentColor;">100.00%</div>
<div style="position:absolute;left:21px;top:530.70px;width:1414px;height:30.53px;background:#ffffff;border-top:1px solid #e6e8ec;box-sizing:border-box"></div>
<div style="position:absolute;left:9px;top:530.70px;width:12.4px;height:30.53px;background:#0ca846;border-top:1px solid rgba(255,255,255,0.6);box-sizing:border-box"></div>
<div style="position:absolute;left:12.2px;top:546.52px;width:6px;height:1.3px;background:#fff"></div>
<div style="position:absolute;left:14.55px;top:544.17px;width:1.3px;height:6px;background:#fff"></div>
<div style="position:absolute;left:28.2px;top:540.57px;width:11.2px;height:11.2px;box-sizing:border-box;border:1px solid #d8dbe0;border-radius:2.8px;background:#fff"></div>
<div style="position:absolute;left:52px;top:541.00px;font-size:11px;line-height:11px;color:#1f2937;font-weight:400;letter-spacing:0.211px;white-space:nowrap;-webkit-text-stroke:0.15px currentColor;">TikTok - US - PlayFull - Direct</div>
<div style="position:absolute;right:1094.5px;top:541.00px;font-size:11px;line-height:11px;color:#1f2937;font-weight:400;letter-spacing:0.0px;white-space:nowrap;text-align:right;-webkit-text-stroke:0.15px currentColor;">650</div>
<div style="position:absolute;right:992.0px;top:541.00px;font-size:11px;line-height:11px;color:#1f2937;font-weight:400;letter-spacing:0.0px;white-space:nowrap;text-align:right;-webkit-text-stroke:0.15px currentColor;">606</div>
<div style="position:absolute;left:466.1px;top:542.87px;width:55.9px;height:6.4px;border-radius:3.2px;background:#3daf58;overflow:hidden"><div style="position:absolute;left:0;top:0;height:6.4px;width:33.1px;background:#fa6a0a"></div></div>
<div style="position:absolute;right:881.7px;top:541.50px;font-size:10px;line-height:10px;color:#1f2937;font-weight:400;letter-spacing:0.3px;white-space:nowrap;text-align:right;">57.7%</div>
<div style="position:absolute;right:812.5px;top:541.00px;font-size:11px;line-height:11px;color:#1f2937;font-weight:400;letter-spacing:0.0px;white-space:nowrap;text-align:right;-webkit-text-stroke:0.15px currentColor;">0</div>
<div style="position:absolute;right:708.0px;top:541.00px;font-size:11px;line-height:11px;color:#1f2937;font-weight:400;letter-spacing:0.0px;white-space:nowrap;text-align:right;-webkit-text-stroke:0.15px currentColor;">0</div>
<div style="position:absolute;right:654.8px;top:541.00px;font-size:11px;line-height:11px;color:#1f2937;font-weight:400;letter-spacing:0.2px;white-space:nowrap;text-align:right;-webkit-text-stroke:0.15px currentColor;">0.00%</div>
<div style="position:absolute;right:557.0px;top:541.00px;font-size:11px;line-height:11px;color:#1f2937;font-weight:400;letter-spacing:0.0px;white-space:nowrap;text-align:right;-webkit-text-stroke:0.15px currentColor;">30</div>
<div style="position:absolute;right:486.5px;top:541.00px;font-size:11px;line-height:11px;color:#1f2937;font-weight:400;letter-spacing:0.0px;white-space:nowrap;text-align:right;-webkit-text-stroke:0.15px currentColor;">58</div>
<div style="position:absolute;right:415.5px;top:541.00px;font-size:11px;line-height:11px;color:#1f2937;font-weight:400;letter-spacing:0.0px;white-space:nowrap;text-align:right;-webkit-text-stroke:0.15px currentColor;">0</div>
<div style="position:absolute;right:368.79999999999995px;top:541.00px;font-size:11px;line-height:11px;color:#1f2937;font-weight:400;letter-spacing:0.2px;white-space:nowrap;text-align:right;-webkit-text-stroke:0.15px currentColor;">4.62%</div>
<div style="position:absolute;right:319.29999999999995px;top:541.00px;font-size:11px;line-height:11px;color:#1f2937;font-weight:400;letter-spacing:0.2px;white-space:nowrap;text-align:right;-webkit-text-stroke:0.15px currentColor;">0.00%</div>
<div style="position:absolute;right:242.29999999999995px;top:541.00px;font-size:11px;line-height:11px;color:#1f2937;font-weight:400;letter-spacing:0.2px;white-space:nowrap;text-align:right;-webkit-text-stroke:0.15px currentColor;">$49.75</div>
<div style="position:absolute;right:178.79999999999995px;top:541.00px;font-size:11px;line-height:11px;color:#22a352;font-weight:400;letter-spacing:0.2px;white-space:nowrap;text-align:right;-webkit-text-stroke:0.15px currentColor;">$49.75</div>
<div style="position:absolute;right:116.79999999999995px;top:541.00px;font-size:11px;line-height:11px;color:#1f2937;font-weight:400;letter-spacing:0.2px;white-space:nowrap;text-align:right;-webkit-text-stroke:0.15px currentColor;">0.00%</div>
<div style="position:absolute;right:15.299999999999955px;top:541.00px;font-size:11px;line-height:11px;color:#1f2937;font-weight:400;letter-spacing:0.2px;white-space:nowrap;text-align:right;-webkit-text-stroke:0.15px currentColor;">100.00%</div>
<div style="position:absolute;left:21px;top:561.23px;width:1414px;height:30.53px;background:#f8f9fb;border-top:1px solid #e6e8ec;box-sizing:border-box"></div>
<div style="position:absolute;left:9px;top:561.23px;width:12.4px;height:30.53px;background:#d3d6dc;border-top:1px solid rgba(255,255,255,0.6);box-sizing:border-box"></div>
<div style="position:absolute;left:13.9px;top:576.40px;width:2.5px;height:2.5px;border-radius:1.25px;background:#374151"></div>
<div style="position:absolute;left:28.2px;top:571.10px;width:11.2px;height:11.2px;box-sizing:border-box;border:1px solid #d8dbe0;border-radius:2.8px;background:#fff"></div>
<div style="position:absolute;left:52px;top:572.00px;font-size:11px;line-height:11px;color:#1f2937;font-weight:400;letter-spacing:0.17px;white-space:nowrap;-webkit-text-stroke:0.15px currentColor;">AD - DE - CPI - BlueRewards - Mobile - 3G</div>
<div style="position:absolute;right:1094.5px;top:572.00px;font-size:11px;line-height:11px;color:#1f2937;font-weight:400;letter-spacing:0.0px;white-space:nowrap;text-align:right;-webkit-text-stroke:0.15px currentColor;">595</div>
<div style="position:absolute;right:992.0px;top:572.00px;font-size:11px;line-height:11px;color:#1f2937;font-weight:400;letter-spacing:0.0px;white-space:nowrap;text-align:right;-webkit-text-stroke:0.15px currentColor;">55</div>
<div style="position:absolute;left:466.1px;top:573.40px;width:55.9px;height:6.4px;border-radius:3.2px;background:#3daf58;overflow:hidden"><div style="position:absolute;left:0;top:0;height:6.4px;width:23.6px;background:#fa6a0a"></div></div>
<div style="position:absolute;right:881.7px;top:572.50px;font-size:10px;line-height:10px;color:#1f2937;font-weight:400;letter-spacing:0.3px;white-space:nowrap;text-align:right;">40.7%</div>
<div style="position:absolute;right:812.5px;top:572.00px;font-size:11px;line-height:11px;color:#1f2937;font-weight:400;letter-spacing:0.0px;white-space:nowrap;text-align:right;-webkit-text-stroke:0.15px currentColor;">0</div>
<div style="position:absolute;right:708.0px;top:572.00px;font-size:11px;line-height:11px;color:#1f2937;font-weight:400;letter-spacing:0.0px;white-space:nowrap;text-align:right;-webkit-text-stroke:0.15px currentColor;">0</div>
<div style="position:absolute;right:654.8px;top:572.00px;font-size:11px;line-height:11px;color:#1f2937;font-weight:400;letter-spacing:0.2px;white-space:nowrap;text-align:right;-webkit-text-stroke:0.15px currentColor;">0.00%</div>
<div style="position:absolute;right:557.0px;top:572.00px;font-size:11px;line-height:11px;color:#1f2937;font-weight:400;letter-spacing:0.0px;white-space:nowrap;text-align:right;-webkit-text-stroke:0.15px currentColor;">0</div>
<div style="position:absolute;right:486.5px;top:572.00px;font-size:11px;line-height:11px;color:#1f2937;font-weight:400;letter-spacing:0.0px;white-space:nowrap;text-align:right;-webkit-text-stroke:0.15px currentColor;">0</div>
<div style="position:absolute;right:415.5px;top:572.00px;font-size:11px;line-height:11px;color:#1f2937;font-weight:400;letter-spacing:0.0px;white-space:nowrap;text-align:right;-webkit-text-stroke:0.15px currentColor;">0</div>
<div style="position:absolute;right:368.79999999999995px;top:572.00px;font-size:11px;line-height:11px;color:#1f2937;font-weight:400;letter-spacing:0.2px;white-space:nowrap;text-align:right;-webkit-text-stroke:0.15px currentColor;">0.00%</div>
<div style="position:absolute;right:319.29999999999995px;top:572.00px;font-size:11px;line-height:11px;color:#1f2937;font-weight:400;letter-spacing:0.2px;white-space:nowrap;text-align:right;-webkit-text-stroke:0.15px currentColor;">0.00%</div>
<div style="position:absolute;right:242.29999999999995px;top:572.00px;font-size:11px;line-height:11px;color:#1f2937;font-weight:400;letter-spacing:0.2px;white-space:nowrap;text-align:right;-webkit-text-stroke:0.15px currentColor;">$0.00</div>
<div style="position:absolute;right:178.79999999999995px;top:572.00px;font-size:11px;line-height:11px;color:#1f2937;font-weight:400;letter-spacing:0.2px;white-space:nowrap;text-align:right;-webkit-text-stroke:0.15px currentColor;">$0.00</div>
<div style="position:absolute;right:116.79999999999995px;top:572.00px;font-size:11px;line-height:11px;color:#1f2937;font-weight:400;letter-spacing:0.2px;white-space:nowrap;text-align:right;-webkit-text-stroke:0.15px currentColor;">0.00%</div>
<div style="position:absolute;right:15.299999999999955px;top:572.00px;font-size:11px;line-height:11px;color:#1f2937;font-weight:400;letter-spacing:0.2px;white-space:nowrap;text-align:right;-webkit-text-stroke:0.15px currentColor;">0.00%</div>
<div style="position:absolute;left:21px;top:591.76px;width:1414px;height:30.53px;background:#ffffff;border-top:1px solid #e6e8ec;box-sizing:border-box"></div>
<div style="position:absolute;left:9px;top:591.76px;width:12.4px;height:30.53px;background:#d3d6dc;border-top:1px solid rgba(255,255,255,0.6);box-sizing:border-box"></div>
<div style="position:absolute;left:13.9px;top:606.93px;width:2.5px;height:2.5px;border-radius:1.25px;background:#374151"></div>
<div style="position:absolute;left:28.2px;top:601.63px;width:11.2px;height:11.2px;box-sizing:border-box;border:1px solid #d8dbe0;border-radius:2.8px;background:#fff"></div>
<div style="position:absolute;left:52px;top:602.00px;font-size:11px;line-height:11px;color:#1f2937;font-weight:400;letter-spacing:0.231px;white-space:nowrap;-webkit-text-stroke:0.15px currentColor;">AD - CH - CC - BlueRewards - Mobile - Wifi</div>
<div style="position:absolute;right:1094.5px;top:602.00px;font-size:11px;line-height:11px;color:#1f2937;font-weight:400;letter-spacing:0.0px;white-space:nowrap;text-align:right;-webkit-text-stroke:0.15px currentColor;">540</div>
<div style="position:absolute;right:992.0px;top:602.00px;font-size:11px;line-height:11px;color:#1f2937;font-weight:400;letter-spacing:0.0px;white-space:nowrap;text-align:right;-webkit-text-stroke:0.15px currentColor;">108</div>
<div style="position:absolute;left:466.1px;top:603.93px;width:55.9px;height:6.4px;border-radius:3.2px;background:#3daf58;overflow:hidden"><div style="position:absolute;left:0;top:0;height:6.4px;width:23.6px;background:#fa6a0a"></div></div>
<div style="position:absolute;right:881.7px;top:602.50px;font-size:10px;line-height:10px;color:#1f2937;font-weight:400;letter-spacing:0.3px;white-space:nowrap;text-align:right;">40.7%</div>
<div style="position:absolute;right:812.5px;top:602.00px;font-size:11px;line-height:11px;color:#1f2937;font-weight:400;letter-spacing:0.0px;white-space:nowrap;text-align:right;-webkit-text-stroke:0.15px currentColor;">0</div>
<div style="position:absolute;right:708.0px;top:602.00px;font-size:11px;line-height:11px;color:#1f2937;font-weight:400;letter-spacing:0.0px;white-space:nowrap;text-align:right;-webkit-text-stroke:0.15px currentColor;">0</div>
<div style="position:absolute;right:654.8px;top:602.00px;font-size:11px;line-height:11px;color:#1f2937;font-weight:400;letter-spacing:0.2px;white-space:nowrap;text-align:right;-webkit-text-stroke:0.15px currentColor;">0.00%</div>
<div style="position:absolute;right:557.0px;top:602.00px;font-size:11px;line-height:11px;color:#1f2937;font-weight:400;letter-spacing:0.0px;white-space:nowrap;text-align:right;-webkit-text-stroke:0.15px currentColor;">0</div>
<div style="position:absolute;right:486.5px;top:602.00px;font-size:11px;line-height:11px;color:#1f2937;font-weight:400;letter-spacing:0.0px;white-space:nowrap;text-align:right;-webkit-text-stroke:0.15px currentColor;">0</div>
<div style="position:absolute;right:415.5px;top:602.00px;font-size:11px;line-height:11px;color:#1f2937;font-weight:400;letter-spacing:0.0px;white-space:nowrap;text-align:right;-webkit-text-stroke:0.15px currentColor;">0</div>
<div style="position:absolute;right:368.79999999999995px;top:602.00px;font-size:11px;line-height:11px;color:#1f2937;font-weight:400;letter-spacing:0.2px;white-space:nowrap;text-align:right;-webkit-text-stroke:0.15px currentColor;">0.00%</div>
<div style="position:absolute;right:319.29999999999995px;top:602.00px;font-size:11px;line-height:11px;color:#1f2937;font-weight:400;letter-spacing:0.2px;white-space:nowrap;text-align:right;-webkit-text-stroke:0.15px currentColor;">0.00%</div>
<div style="position:absolute;right:242.29999999999995px;top:602.00px;font-size:11px;line-height:11px;color:#1f2937;font-weight:400;letter-spacing:0.2px;white-space:nowrap;text-align:right;-webkit-text-stroke:0.15px currentColor;">$0.00</div>
<div style="position:absolute;right:178.79999999999995px;top:602.00px;font-size:11px;line-height:11px;color:#1f2937;font-weight:400;letter-spacing:0.2px;white-space:nowrap;text-align:right;-webkit-text-stroke:0.15px currentColor;">$0.00</div>
<div style="position:absolute;right:116.79999999999995px;top:602.00px;font-size:11px;line-height:11px;color:#1f2937;font-weight:400;letter-spacing:0.2px;white-space:nowrap;text-align:right;-webkit-text-stroke:0.15px currentColor;">0.00%</div>
<div style="position:absolute;right:15.299999999999955px;top:602.00px;font-size:11px;line-height:11px;color:#1f2937;font-weight:400;letter-spacing:0.2px;white-space:nowrap;text-align:right;-webkit-text-stroke:0.15px currentColor;">0.00%</div>
<div style="position:absolute;left:21px;top:622.29px;width:1414px;height:30.53px;background:#f8f9fb;border-top:1px solid #e6e8ec;box-sizing:border-box"></div>
<div style="position:absolute;left:9px;top:622.29px;width:12.4px;height:30.53px;background:#d3d6dc;border-top:1px solid rgba(255,255,255,0.6);box-sizing:border-box"></div>
<div style="position:absolute;left:13.9px;top:637.46px;width:2.5px;height:2.5px;border-radius:1.25px;background:#374151"></div>
<div style="position:absolute;left:28.2px;top:632.16px;width:11.2px;height:11.2px;box-sizing:border-box;border:1px solid #d8dbe0;border-radius:2.8px;background:#fff"></div>
<div style="position:absolute;left:52px;top:633.00px;font-size:11px;line-height:11px;color:#1f2937;font-weight:400;letter-spacing:0.146px;white-space:nowrap;-webkit-text-stroke:0.15px currentColor;">AD - AU - Rewards - BlueRewards - WiFi</div>
<div style="position:absolute;right:1094.5px;top:633.00px;font-size:11px;line-height:11px;color:#1f2937;font-weight:400;letter-spacing:0.0px;white-space:nowrap;text-align:right;-webkit-text-stroke:0.15px currentColor;">0</div>
<div style="position:absolute;right:992.0px;top:633.00px;font-size:11px;line-height:11px;color:#1f2937;font-weight:400;letter-spacing:0.0px;white-space:nowrap;text-align:right;-webkit-text-stroke:0.15px currentColor;">0</div>
<div style="position:absolute;left:466.1px;top:634.46px;width:55.9px;height:6.4px;border-radius:3.2px;background:#3daf58;overflow:hidden"><div style="position:absolute;left:0;top:0;height:6.4px;width:0.0px;background:#fa6a0a"></div></div>
<div style="position:absolute;right:881.7px;top:633.50px;font-size:10px;line-height:10px;color:#1f2937;font-weight:400;letter-spacing:0.3px;white-space:nowrap;text-align:right;">0.0%</div>
<div style="position:absolute;right:812.5px;top:633.00px;font-size:11px;line-height:11px;color:#1f2937;font-weight:400;letter-spacing:0.0px;white-space:nowrap;text-align:right;-webkit-text-stroke:0.15px currentColor;">0</div>
<div style="position:absolute;right:708.0px;top:633.00px;font-size:11px;line-height:11px;color:#1f2937;font-weight:400;letter-spacing:0.0px;white-space:nowrap;text-align:right;-webkit-text-stroke:0.15px currentColor;">0</div>
<div style="position:absolute;right:654.8px;top:633.00px;font-size:11px;line-height:11px;color:#1f2937;font-weight:400;letter-spacing:0.2px;white-space:nowrap;text-align:right;-webkit-text-stroke:0.15px currentColor;">0.00%</div>
<div style="position:absolute;right:557.0px;top:633.00px;font-size:11px;line-height:11px;color:#1f2937;font-weight:400;letter-spacing:0.0px;white-space:nowrap;text-align:right;-webkit-text-stroke:0.15px currentColor;">0</div>
<div style="position:absolute;right:486.5px;top:633.00px;font-size:11px;line-height:11px;color:#1f2937;font-weight:400;letter-spacing:0.0px;white-space:nowrap;text-align:right;-webkit-text-stroke:0.15px currentColor;">0</div>
<div style="position:absolute;right:415.5px;top:633.00px;font-size:11px;line-height:11px;color:#1f2937;font-weight:400;letter-spacing:0.0px;white-space:nowrap;text-align:right;-webkit-text-stroke:0.15px currentColor;">0</div>
<div style="position:absolute;right:368.79999999999995px;top:633.00px;font-size:11px;line-height:11px;color:#1f2937;font-weight:400;letter-spacing:0.2px;white-space:nowrap;text-align:right;-webkit-text-stroke:0.15px currentColor;">0.00%</div>
<div style="position:absolute;right:319.29999999999995px;top:633.00px;font-size:11px;line-height:11px;color:#1f2937;font-weight:400;letter-spacing:0.2px;white-space:nowrap;text-align:right;-webkit-text-stroke:0.15px currentColor;">0.00%</div>
<div style="position:absolute;right:242.29999999999995px;top:633.00px;font-size:11px;line-height:11px;color:#1f2937;font-weight:400;letter-spacing:0.2px;white-space:nowrap;text-align:right;-webkit-text-stroke:0.15px currentColor;">$0.00</div>
<div style="position:absolute;right:178.79999999999995px;top:633.00px;font-size:11px;line-height:11px;color:#1f2937;font-weight:400;letter-spacing:0.2px;white-space:nowrap;text-align:right;-webkit-text-stroke:0.15px currentColor;">$0.00</div>
<div style="position:absolute;right:116.79999999999995px;top:633.00px;font-size:11px;line-height:11px;color:#1f2937;font-weight:400;letter-spacing:0.2px;white-space:nowrap;text-align:right;-webkit-text-stroke:0.15px currentColor;">0.00%</div>
<div style="position:absolute;right:15.299999999999955px;top:633.00px;font-size:11px;line-height:11px;color:#1f2937;font-weight:400;letter-spacing:0.2px;white-space:nowrap;text-align:right;-webkit-text-stroke:0.15px currentColor;">0.00%</div>
</div></body></html>
